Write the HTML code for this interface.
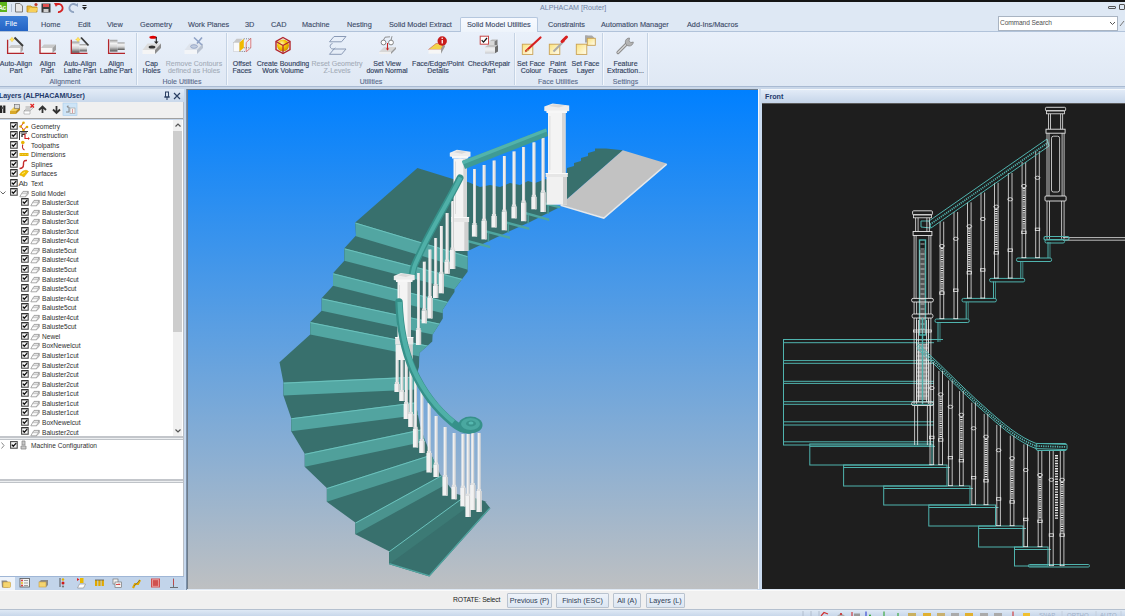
<!DOCTYPE html><html><head><meta charset="utf-8"><style>
*{margin:0;padding:0;box-sizing:border-box}
html,body{width:1125px;height:616px;overflow:hidden;background:#dee8f4;font-family:"Liberation Sans",sans-serif}
body{position:relative}
.a{position:absolute}
.t{position:absolute;white-space:nowrap;line-height:1}
.tab{position:absolute;top:21px;font-size:7.3px;-webkit-text-stroke:0.12px #3b4a68;color:#3b4a68;white-space:nowrap;line-height:1}
.lbl{position:absolute;font-size:7px;-webkit-text-stroke:0.15px #34445f;color:#34445f;text-align:center;line-height:7.7px;white-space:nowrap;transform:translateX(-50%)}
.dis{color:#a3acb8;-webkit-text-stroke:0.1px #a3acb8}
.grp{position:absolute;top:78px;font-size:7px;-webkit-text-stroke:0.12px #5a6b8c;color:#5a6b8c;transform:translateX(-50%);white-space:nowrap;line-height:1}
.sep{position:absolute;top:33px;width:2px;height:52px;border-left:1px solid #c5d3e4;border-right:1px solid #f3f7fc}
.row{position:absolute;height:9px;font-size:6.6px;color:#2e2e2e;white-space:nowrap;line-height:9px}
.cb{position:absolute;width:7px;height:7px;border:1px solid #555;background:#f4f4f4}
.cb:after{content:"";position:absolute;left:1px;top:0px;width:4px;height:2px;border-left:1.3px solid #111;border-bottom:1.3px solid #111;transform:rotate(-50deg);transform-origin:50% 50%;top:1px}
.btn{position:absolute;top:593px;height:15px;border:1px solid #b9c3cf;background:linear-gradient(#eef3fa,#dce6f2);font-size:7.2px;color:#2e3c55;line-height:13px;text-align:center;border-radius:1px}
</style></head><body>
<div class="a" style="left:0;top:0;width:1125px;height:2px;background:#151515"></div>
<div class="a" style="left:0;top:2px;width:1125px;height:14px;background:#dee8f4"></div>
<div class="a" style="left:0;top:2px;width:7px;height:10px;background:#5cb31c"></div>
<div class="t" style="left:-2px;top:3.5px;font-size:7px;color:#eef8e6;font-weight:bold;letter-spacing:-0.5px">Ac</div>
<div class="a" style="left:11px;top:4px;width:1px;height:8px;background:#b3bfcf"></div>
<svg class="a" style="left:14px;top:2px" width="10" height="11"><path d="M1.5 1.5h4.5l2.5 2.5v6h-7z" fill="#e6e6e6" stroke="#7a7a7a" stroke-width="1"/></svg>
<svg class="a" style="left:26px;top:2px" width="13" height="11"><path d="M1 4h4l1 1h5v5H1z" fill="#e9b935" stroke="#b98a1d" stroke-width=".8"/><path d="M2 10l2-4h8l-2 4z" fill="#f7d05a"/><circle cx="10" cy="2.5" r="1.6" fill="#c0392b"/></svg>
<svg class="a" style="left:41px;top:3px" width="10" height="10"><rect x=".5" y=".5" width="9" height="9" fill="#3a3a3a"/><rect x="2" y="1" width="6" height="3" fill="#e05050"/><rect x="2.5" y="6" width="5" height="3" fill="#cfcfcf"/></svg>
<svg class="a" style="left:54px;top:2px" width="11" height="11"><path d="M2 3a4 4 0 1 1 2 7" fill="none" stroke="#d42020" stroke-width="1.8"/><path d="M0 1l4 0-2 4z" fill="#d42020"/></svg>
<svg class="a" style="left:68px;top:2px" width="11" height="11"><path d="M8 3a4 4 0 1 0-2 7" fill="none" stroke="#8fa3c0" stroke-width="1.8"/><path d="M10 1v4l-3-2z" fill="#8fa3c0"/></svg>
<svg class="a" style="left:82px;top:5px" width="6" height="6"><rect x="0.5" y="0" width="4" height="1" fill="#222"/><path d="M0 2h5l-2.5 3z" fill="#222"/></svg>
<div class="t" style="left:540px;top:4.6px;font-size:7.1px;color:#6e82a2">ALPHACAM [Router]</div>
<div class="a" style="left:1108px;top:6px;width:8px;height:3px;border:1px solid #555;border-radius:1px"></div>
<div class="a" style="left:1119px;top:4px;width:6px;height:6px;border:1px solid #555;border-radius:1px"></div>
<div class="a" style="left:0;top:31px;width:1125px;height:1px;background:#b1c3da"></div>
<div class="a" style="left:0;top:16px;width:28px;height:15px;background:linear-gradient(#3d7fd8,#2463c4);border-radius:0 2px 0 0"></div>
<div class="t" style="left:5px;top:20px;font-size:7.6px;color:#fff">File</div>
<div class="a" style="left:460px;top:17px;width:78px;height:15px;background:linear-gradient(#f7faff,#eef4fb);border:1px solid #b5c7de;border-bottom:none;border-radius:2px 2px 0 0"></div>
<div class="tab" style="left:41px">Home</div>
<div class="tab" style="left:78px">Edit</div>
<div class="tab" style="left:107px">View</div>
<div class="tab" style="left:140px">Geometry</div>
<div class="tab" style="left:188px">Work Planes</div>
<div class="tab" style="left:245px">3D</div>
<div class="tab" style="left:271px">CAD</div>
<div class="tab" style="left:302px">Machine</div>
<div class="tab" style="left:347px">Nesting</div>
<div class="tab" style="left:389px">Solid Model Extract</div>
<div class="tab" style="left:467px">Solid Model Utilities</div>
<div class="tab" style="left:548px">Constraints</div>
<div class="tab" style="left:601px">Automation Manager</div>
<div class="tab" style="left:687px">Add-Ins/Macros</div>
<div class="a" style="left:998px;top:16px;width:120px;height:15px;background:#fff;border:1px solid #a9b4c2"></div>
<div class="t" style="left:1000px;top:19.5px;font-size:6.6px;letter-spacing:-0.1px;color:#505050">Command Search</div>
<svg class="a" style="left:1109px;top:21px" width="7" height="5"><path d="M1 1l2.5 2.5L6 1" fill="none" stroke="#555" stroke-width="1"/></svg>
<svg class="a" style="left:1119px;top:19px" width="6" height="8"><path d="M1 7l4-5" stroke="#777" stroke-width="1"/></svg>
<div class="a" style="left:0;top:32px;width:1125px;height:54px;background:linear-gradient(#e9f0fa,#dfe8f4)"></div>
<div class="a" style="left:0;top:86px;width:1125px;height:1px;background:#a9bad2"></div>
<div class="a" style="left:0;top:87px;width:1125px;height:2px;background:#c9d7e9"></div>
<div class="sep" style="left:136px"></div>
<div class="sep" style="left:226px"></div>
<div class="sep" style="left:514px"></div>
<div class="sep" style="left:602px"></div>
<div class="sep" style="left:647px"></div>
<div class="lbl" style="left:16px;top:59.6px">Auto-Align<br>Part</div>
<div class="lbl" style="left:47.5px;top:59.6px">Align<br>Part</div>
<div class="lbl" style="left:80px;top:59.6px">Auto-Align<br>Lathe Part</div>
<div class="lbl" style="left:116px;top:59.6px">Align<br>Lathe Part</div>
<div class="lbl" style="left:151.5px;top:59.6px">Cap<br>Holes</div>
<div class="lbl dis" style="left:194px;top:59.6px">Remove Contours<br>defined as Holes</div>
<div class="lbl" style="left:242px;top:59.6px">Offset<br>Faces</div>
<div class="lbl" style="left:283px;top:59.6px">Create Bounding<br>Work Volume</div>
<div class="lbl dis" style="left:337px;top:59.6px">Reset Geometry<br>Z-Levels</div>
<div class="lbl" style="left:387px;top:59.6px">Set View<br>down Normal</div>
<div class="lbl" style="left:438px;top:59.6px">Face/Edge/Point<br>Details</div>
<div class="lbl" style="left:489px;top:59.6px">Check/Repair<br>Part</div>
<div class="lbl" style="left:531px;top:59.6px">Set Face<br>Colour</div>
<div class="lbl" style="left:558px;top:59.6px">Paint<br>Faces</div>
<div class="lbl" style="left:585.5px;top:59.6px">Set Face<br>Layer</div>
<div class="lbl" style="left:625.5px;top:59.6px">Feature<br>Extraction...</div>
<div class="grp" style="left:65px">Alignment</div>
<div class="grp" style="left:182px">Hole Utilities</div>
<div class="grp" style="left:371px">Utilities</div>
<div class="grp" style="left:558px">Face Utilities</div>
<div class="grp" style="left:625.5px">Settings</div>
<svg class="a" style="left:0;top:0" width="1" height="1"><defs>
<linearGradient id="cyl" x1="0" y1="0" x2="0" y2="1"><stop offset="0" stop-color="#9a9a9a"/><stop offset=".3" stop-color="#f4f4f4"/><stop offset=".6" stop-color="#d0d0d0"/><stop offset="1" stop-color="#555"/></linearGradient>
<radialGradient id="ysph" cx=".4" cy=".35" r=".7"><stop offset="0" stop-color="#fff6b0"/><stop offset=".5" stop-color="#f5c400"/><stop offset="1" stop-color="#c98a00"/></radialGradient>
<linearGradient id="ysq" x1="0" y1="0" x2="1" y2="1"><stop offset="0" stop-color="#fbe27a"/><stop offset="1" stop-color="#fffdf2"/></linearGradient>
</defs></svg>
<svg class="a" style="left:4px;top:34px;overflow:visible" width="24" height="22" viewBox="4 34 24 22"><polygon points="8.5,48 11,45 23,45 20.5,48" fill="#c9c9c9"/><rect x="8.5" y="48" width="12" height="5" fill="#f7f7f7"/><polygon points="20.5,48 23,45 23,50 20.5,53" fill="#a9a9a9"/><path d="M7.6 39.8V53.4H24" fill="none" stroke="#b3262b" stroke-width="1.3"/><line x1="14.5" y1="37.5" x2="23" y2="46" stroke="#3c3c3c" stroke-width="2"/><polygon points="12,36.7 12.9,38.6 14.8,39.5 12.9,40.4 12,42.3 11.1,40.4 9.2,39.5 11.1,38.6" fill="#f2c21a"/><circle cx="12" cy="39.5" r="1.6" fill="#ffe46a"/></svg>
<svg class="a" style="left:36px;top:34px;overflow:visible" width="24" height="22" viewBox="36 34 24 22"><polygon points="41,48 44,44.5 56,44.5 52.5,48" fill="#c9c9c9"/><rect x="41" y="48" width="11.5" height="5" fill="#f7f7f7"/><polygon points="52.5,48 56,44.5 56,50 52.5,53" fill="#a0a0a0"/><path d="M40 39.5V53.4H56" fill="none" stroke="#b3262b" stroke-width="1.3"/></svg>
<svg class="a" style="left:68px;top:34px;overflow:visible" width="24" height="22" viewBox="68 34 24 22"><rect x="72" y="41.5" width="7.5" height="11.3" fill="url(#cyl)"/><rect x="79.5" y="44" width="7.5" height="7.5" fill="url(#cyl)"/><path d="M71.3 39.8V53.4H87.5" fill="none" stroke="#b3262b" stroke-width="1.3"/><line x1="81" y1="37.5" x2="88.5" y2="45.5" stroke="#3c3c3c" stroke-width="1.8"/><polygon points="78,36.7 78.9,38.6 80.8,39.5 78.9,40.4 78,42.3 77.1,40.4 75.2,39.5 77.1,38.6" fill="#f2c21a"/><circle cx="78" cy="39.5" r="1.6" fill="#ffe46a"/></svg>
<svg class="a" style="left:104px;top:34px;overflow:visible" width="24" height="22" viewBox="104 34 24 22"><rect x="110" y="39.8" width="7.5" height="11.8" fill="url(#cyl)"/><rect x="117.5" y="42.4" width="7.2" height="7.6" fill="url(#cyl)"/><path d="M108.6 39.3V53.4H125" fill="none" stroke="#b3262b" stroke-width="1.3"/></svg>
<svg class="a" style="left:140px;top:34px;overflow:visible" width="24" height="22" viewBox="140 34 24 22"><polygon points="142.5,50 147.5,43.5 161,43.5 155,50" fill="#dcdcdc"/><rect x="142.5" y="50" width="12.5" height="4" fill="#f5f5f5"/><polygon points="155,50 161,43.5 161,48 155,54" fill="#8c8c8c"/><ellipse cx="152" cy="47" rx="3.4" ry="1.6" fill="#333"/><ellipse cx="153" cy="37.3" rx="3.6" ry="1.5" fill="#e00000"/><path d="M156.3 37v5" stroke="#222" stroke-width="1.1"/><path d="M154 41.5h4.6l-2.3 2.6z" fill="#222"/></svg>
<svg class="a" style="left:182px;top:34px;overflow:visible" width="24" height="22" viewBox="182 34 24 22"><polygon points="184.5,50 189.5,43.5 203,43.5 197,50" fill="#dfe4ec"/><rect x="184.5" y="50" width="12.5" height="4" fill="#f3f5f8"/><polygon points="197,50 203,43.5 203,48 197,54" fill="#b9c2d0"/><ellipse cx="194" cy="46.5" rx="3.4" ry="1.8" fill="#c2cde0" stroke="#8a9cc0" stroke-width=".8"/><path d="M194 37.5l8 7.5M202 37.5l-5 6" stroke="#8fa2c6" stroke-width="1.6"/></svg>
<svg class="a" style="left:230px;top:34px;overflow:visible" width="24" height="22" viewBox="230 34 24 22"><polygon points="233.5,42.5 236.5,38.8 242.5,38.8 239.5,42.5" fill="#c8c8c8"/><rect x="233.5" y="42.5" width="6" height="9" fill="#fafafa" stroke="#aaa" stroke-width=".3"/><polygon points="239.5,42.5 243.8,38.8 243.8,47.8 239.5,51.5" fill="#f1b900"/><polygon points="246.2,42.5 250.8,38.3 250.8,47.8 246.2,51.8" fill="none" stroke="#e07070" stroke-width=".9"/><path d="M243.8 38.8h7M243.8 47.8h7M239.5 51.5h6.7" stroke="#555" stroke-width=".7" stroke-dasharray="1 1.2"/></svg>
<svg class="a" style="left:272px;top:34px;overflow:visible" width="24" height="22" viewBox="272 34 24 22"><circle cx="283" cy="45.5" r="6" fill="url(#ysph)"/><polygon points="283,37.5 290,41.5 290,49.5 283,53.5 276,49.5 276,41.5" fill="none" stroke="#b3262b" stroke-width="1.4"/><path d="M283 45.5V53.5M283 45.5L276 41.5M283 45.5L290 41.5" stroke="#b3262b" stroke-width="1.2"/></svg>
<svg class="a" style="left:326px;top:34px;overflow:visible" width="24" height="22" viewBox="326 34 24 22"><polygon points="329.5,41.8 334,36.5 346,36.5 341.5,41.8" fill="none" stroke="#8a9ab6" stroke-width="1"/><polygon points="329.5,54.3 334,49 346,49 341.5,54.3" fill="none" stroke="#8a9ab6" stroke-width="1"/><path d="M332.5 43.5a2.8 2.8 0 1 0 2.8 4.3" fill="none" stroke="#8a9ab6" stroke-width="1"/></svg>
<svg class="a" style="left:376px;top:34px;overflow:visible" width="24" height="22" viewBox="376 34 24 22"><polygon points="379,52 384,47 396,47 391,52" fill="#d7d7d7"/><polygon points="379,52 391,52 391,54 379,54" fill="#f0f0f0"/><polygon points="391,52 396,47 396,49 391,54" fill="#999"/><circle cx="383.5" cy="42.5" r="2.4" fill="#fff" stroke="#777" stroke-width=".9"/><circle cx="391" cy="42.5" r="2.4" fill="#fff" stroke="#777" stroke-width=".9"/><path d="M383.5 40.2 L385 37.2 L390 36.8 M391 40.2l1-4" fill="none" stroke="#777" stroke-width=".8"/><path d="M387.5 43v6" stroke="#c82020" stroke-width="1.1"/><path d="M385.8 48.5h3.4l-1.7 2z" fill="#c82020"/></svg>
<svg class="a" style="left:426px;top:34px;overflow:visible" width="24" height="22" viewBox="426 34 24 22"><polygon points="428.5,49.5 436,43.5 444,43.5 441,49.5" fill="#f2d34a" stroke="#c04040" stroke-width=".5"/><rect x="428.5" y="49.5" width="12.5" height="4.2" fill="#f6f6f6"/><polygon points="441,49.5 444,43.5 445,46.5 441,53.7" fill="#9a9a9a"/><circle cx="442.2" cy="41" r="4.7" fill="#c91c1c"/><rect x="441.6" y="40" width="1.3" height="3.5" fill="#fff"/><circle cx="442.2" cy="38.3" r=".8" fill="#fff"/></svg>
<svg class="a" style="left:478px;top:34px;overflow:visible" width="24" height="22" viewBox="478 34 24 22"><polygon points="489,41.5 492,39.5 497.5,39.5 494.5,41.5" fill="#b9b9b9"/><rect x="489" y="41.5" width="5.5" height="5" fill="#d9d9d9"/><polygon points="494.5,41.5 497.5,39.5 497.5,45 494.5,46.5" fill="#7a7a7a"/><polygon points="485,47 488,45 498,45 495,47" fill="#c4c4c4"/><rect x="485" y="47" width="10" height="6.3" fill="url(#cyl)" opacity=".55"/><rect x="485" y="47" width="10" height="6.3" fill="#f2f2f2" opacity=".6"/><polygon points="495,47 498,45 498,51.5 495,53.3" fill="#6c6c6c"/><rect x="480.2" y="36.2" width="8.3" height="8" fill="#fff" stroke="#c84848" stroke-width="1"/><path d="M481.7 40.2l1.8 2 3.5-4.2" fill="none" stroke="#111" stroke-width="1.2"/></svg>
<svg class="a" style="left:520px;top:34px;overflow:visible" width="24" height="22" viewBox="520 34 24 22"><rect x="522.3" y="44.2" width="10.5" height="10.2" fill="url(#ysq)" stroke="#c9a050" stroke-width=".9"/><path d="M526 51l14.5-13.5" stroke="#d62020" stroke-width="2.2" stroke-linecap="round"/><path d="M524.5 52.5l3.5-3.5 1.3 1.3z" fill="#c8a040"/></svg>
<svg class="a" style="left:547px;top:34px;overflow:visible" width="24" height="22" viewBox="547 34 24 22"><rect x="549.3" y="44.2" width="10.5" height="10.2" fill="url(#ysq)" stroke="#c9a050" stroke-width=".9"/><path d="M553.5 51.5l9-9" stroke="#aaa" stroke-width="2"/><path d="M562 41.5l4.5-4.5" stroke="#d82020" stroke-width="3" stroke-linecap="round"/><circle cx="563" cy="41" r="1.6" fill="#d82020"/></svg>
<svg class="a" style="left:574px;top:34px;overflow:visible" width="24" height="22" viewBox="574 34 24 22"><polygon points="585,35.5 592,35.5 595,38.5 587.5,38.5" fill="#a8a8a8"/><rect x="585" y="35.5" width="2.5" height="7" fill="#a8a8a8"/><rect x="587.3" y="38.3" width="8" height="7" fill="url(#ysq)" stroke="#c9a050" stroke-width=".9"/><rect x="576.3" y="44.2" width="10.5" height="10.2" fill="url(#ysq)" stroke="#c9a050" stroke-width=".9"/></svg>
<svg class="a" style="left:614px;top:34px;overflow:visible" width="24" height="22" viewBox="614 34 24 22"><path d="M618 52.5l9.5-9.5" stroke="#8a8a8a" stroke-width="3.2" stroke-linecap="round"/><path d="M618 52.5l9.5-9.5" stroke="#d4d4d4" stroke-width="1.4" stroke-linecap="round"/><path d="M629.5 38a4 4 0 1 0 3.8 4l-2.6 .6-1.6-1.8z" fill="#b3b3b3" stroke="#7d7d7d" stroke-width=".7"/></svg>
<div class="a" style="left:0;top:89px;width:187px;height:501px;background:#c8d8ec"></div>
<div class="a" style="left:0;top:89px;width:184px;height:13px;background:linear-gradient(#e3ecf7,#c9d8eb)"></div>
<div class="t" style="left:-1px;top:93.2px;font-size:7.1px;letter-spacing:-0.1px;color:#1f3a6b;font-weight:bold">Layers (ALPHACAM/User)</div>
<svg class="a" style="left:163px;top:91px" width="8" height="10"><rect x="2.5" y="1" width="3" height="5" fill="none" stroke="#2a3f63" stroke-width="1"/><path d="M1 6h6M4 6v3" stroke="#2a3f63" stroke-width="1"/></svg>
<svg class="a" style="left:173px;top:92px" width="8" height="8"><path d="M1 1l6 6M7 1l-6 6" stroke="#2a3f63" stroke-width="1.2"/></svg>
<div class="a" style="left:0;top:102px;width:183px;height:17px;background:#f0f0f0;border-bottom:1px solid #a0a0a0"></div>
<div class="a" style="left:0;top:120px;width:183px;height:316px;background:#fff"></div>
<div class="a" style="left:173px;top:120px;width:9px;height:316px;background:#f0f0f0"></div>
<div class="a" style="left:173px;top:131px;width:9px;height:201px;background:#cdcdcd"></div>
<svg class="a" style="left:174px;top:122px" width="8" height="6"><path d="M1.5 4.5L4 2l2.5 2.5" fill="none" stroke="#555" stroke-width="1.2"/></svg>
<svg class="a" style="left:174px;top:428px" width="8" height="6"><path d="M1.5 1.5L4 4l2.5-2.5" fill="none" stroke="#555" stroke-width="1.2"/></svg>
<div class="a" style="left:0;top:436px;width:184px;height:2px;background:#c3c6cb"></div>
<div class="a" style="left:0;top:438px;width:184px;height:1px;background:#eceef0"></div>
<div class="a" style="left:0;top:439px;width:184px;height:1px;background:#bfc3c8"></div>
<div class="a" style="left:0;top:440px;width:183px;height:39px;background:#fff"></div>
<div class="a" style="left:0;top:479px;width:184px;height:2px;background:#c3c6cb"></div>
<div class="a" style="left:0;top:481px;width:184px;height:1px;background:#eceef0"></div>
<div class="a" style="left:0;top:482px;width:184px;height:1px;background:#bfc3c8"></div>
<div class="a" style="left:0;top:483px;width:183px;height:93px;background:#fff"></div>
<div class="a" style="left:183px;top:102px;width:1px;height:474px;background:#b9bec5"></div>
<div class="a" style="left:184px;top:89px;width:2px;height:501px;background:#c6d8ee"></div>
<div class="a" style="left:186px;top:89px;width:1px;height:501px;background:#7b90a9"></div>
<div class="a" style="left:0;top:576px;width:184px;height:14px;background:#c2d4ea;border-top:1px solid #9fb6d6"></div>
<div class="a" style="left:0;top:577px;width:15px;height:13px;background:#eef3fa"></div>
<svg class="a" style="left:10px;top:121.50px" width="8" height="8"><rect x="0.6" y="0.6" width="6.6" height="6.6" fill="#f7f7f7" stroke="#4a4a4a" stroke-width="1.1"/><path d="M0.8 0.8H7" stroke="#222" stroke-width=".9"/><path d="M1.8 3.6L3.3 5.3 6.2 2.1" fill="none" stroke="#111" stroke-width="1.3"/></svg>
<svg class="a" style="left:19px;top:120.60px" width="11" height="11" viewBox="0 0 11 11"><path d="M4.5 1.5L2 5.5 4.5 9 8 5.5" fill="none" stroke="#d03030" stroke-width="1"/><circle cx="4.5" cy="1.8" r="1.3" fill="#e0a800"/><circle cx="1.6" cy="5.5" r="1.3" fill="#e0a800"/><circle cx="8" cy="6" r="1.3" fill="#e0a800"/><circle cx="4.5" cy="9" r="1.3" fill="#e0a800"/></svg>
<div class="row" style="left:31px;top:121.60px">Geometry</div>
<svg class="a" style="left:10px;top:131.06px" width="8" height="8"><rect x="0.6" y="0.6" width="6.6" height="6.6" fill="#f7f7f7" stroke="#4a4a4a" stroke-width="1.1"/><path d="M0.8 0.8H7" stroke="#222" stroke-width=".9"/><path d="M1.8 3.6L3.3 5.3 6.2 2.1" fill="none" stroke="#111" stroke-width="1.3"/></svg>
<svg class="a" style="left:19px;top:130.16px" width="11" height="11" viewBox="0 0 11 11"><path d="M0.5 10V1.5H9M1.5 3H8M2.5 4.5H6" stroke="#333" stroke-width="1" fill="none"/><rect x="2.2" y="5.2" width="1.6" height="1.6" fill="#222"/><path d="M6 3.5V8.5H9.5" stroke="#d02020" stroke-width="1.2" fill="none"/><path d="M9 7l1.8 1.5L9 10z" fill="#d02020"/></svg>
<div class="row" style="left:31px;top:131.16px">Construction</div>
<svg class="a" style="left:10px;top:140.62px" width="8" height="8"><rect x="0.6" y="0.6" width="6.6" height="6.6" fill="#f7f7f7" stroke="#4a4a4a" stroke-width="1.1"/><path d="M0.8 0.8H7" stroke="#222" stroke-width=".9"/><path d="M1.8 3.6L3.3 5.3 6.2 2.1" fill="none" stroke="#111" stroke-width="1.3"/></svg>
<svg class="a" style="left:19px;top:139.72px" width="11" height="11" viewBox="0 0 11 11"><circle cx="3.8" cy="2.5" r="1.8" fill="#e8b400"/><path d="M3.8 4.5C3 7 3.5 9 5.5 10" fill="none" stroke="#c03030" stroke-width="1.1"/></svg>
<div class="row" style="left:31px;top:140.72px">Toolpaths</div>
<svg class="a" style="left:10px;top:150.18px" width="8" height="8"><rect x="0.6" y="0.6" width="6.6" height="6.6" fill="#f7f7f7" stroke="#4a4a4a" stroke-width="1.1"/><path d="M0.8 0.8H7" stroke="#222" stroke-width=".9"/><path d="M1.8 3.6L3.3 5.3 6.2 2.1" fill="none" stroke="#111" stroke-width="1.3"/></svg>
<svg class="a" style="left:19px;top:149.28px" width="11" height="11" viewBox="0 0 11 11"><rect x="0.5" y="4" width="9" height="3" fill="#e6b400"/><path d="M1.5 5.5h7" stroke="#fff3a0" stroke-width=".6" stroke-dasharray=".8 .8"/></svg>
<div class="row" style="left:31px;top:150.28px">Dimensions</div>
<svg class="a" style="left:10px;top:159.74px" width="8" height="8"><rect x="0.6" y="0.6" width="6.6" height="6.6" fill="#f7f7f7" stroke="#4a4a4a" stroke-width="1.1"/><path d="M0.8 0.8H7" stroke="#222" stroke-width=".9"/><path d="M1.8 3.6L3.3 5.3 6.2 2.1" fill="none" stroke="#111" stroke-width="1.3"/></svg>
<svg class="a" style="left:19px;top:158.84px" width="11" height="11" viewBox="0 0 11 11"><path d="M8 1.5C4 1 4.5 4 4.5 5.5S4 9.5 0.5 9.5" fill="none" stroke="#c42a2a" stroke-width="1.4"/></svg>
<div class="row" style="left:31px;top:159.84px">Splines</div>
<svg class="a" style="left:10px;top:169.30px" width="8" height="8"><rect x="0.6" y="0.6" width="6.6" height="6.6" fill="#f7f7f7" stroke="#4a4a4a" stroke-width="1.1"/><path d="M0.8 0.8H7" stroke="#222" stroke-width=".9"/><path d="M1.8 3.6L3.3 5.3 6.2 2.1" fill="none" stroke="#111" stroke-width="1.3"/></svg>
<svg class="a" style="left:19px;top:168.40px" width="11" height="11" viewBox="0 0 11 11"><path d="M0.5 7C2 4 4 2.5 6.5 2.3 8 2.2 9 3 9.5 3.5 8 5 7 6.5 5 9 3.5 8 2 7.3 0.5 7z" fill="#f0c000" stroke="#d89a00" stroke-width=".5"/><path d="M3 6l3-2" stroke="#fff2a0" stroke-width=".8"/></svg>
<div class="row" style="left:31px;top:169.40px">Surfaces</div>
<svg class="a" style="left:10px;top:178.86px" width="8" height="8"><rect x="0.6" y="0.6" width="6.6" height="6.6" fill="#f7f7f7" stroke="#4a4a4a" stroke-width="1.1"/><path d="M0.8 0.8H7" stroke="#222" stroke-width=".9"/><path d="M1.8 3.6L3.3 5.3 6.2 2.1" fill="none" stroke="#111" stroke-width="1.3"/></svg>
<div class="t" style="left:18.5px;top:179.86px;font-size:8px;color:#444;letter-spacing:-0.6px">Ab</div>
<div class="row" style="left:31px;top:178.96px">Text</div>
<svg class="a" style="left:10px;top:188.42px" width="8" height="8"><rect x="0.6" y="0.6" width="6.6" height="6.6" fill="#f7f7f7" stroke="#4a4a4a" stroke-width="1.1"/><path d="M0.8 0.8H7" stroke="#222" stroke-width=".9"/><path d="M1.8 3.6L3.3 5.3 6.2 2.1" fill="none" stroke="#111" stroke-width="1.3"/></svg>
<svg class="a" style="left:19px;top:187.52px" width="11" height="11" viewBox="0 0 11 11"><path d="M0.8 8.8L2.6 5.6H8.2L6.4 8.8z" fill="#fbfbfb" stroke="#8a8a8a" stroke-width=".7"/><path d="M2.6 5.6L4 3.4H9.2L8.2 5.6M9.2 3.4V6.2L6.4 8.8" fill="#e2e2e2" stroke="#8a8a8a" stroke-width=".7"/></svg>
<div class="row" style="left:31px;top:188.52px">Solid Model</div>
<svg class="a" style="left:0px;top:190.02px" width="6" height="6"><path d="M0.5 1.5L3 4l2.5-2.5" fill="none" stroke="#666" stroke-width="1"/></svg>
<svg class="a" style="left:21px;top:197.98px" width="8" height="8"><rect x="0.6" y="0.6" width="6.6" height="6.6" fill="#f7f7f7" stroke="#4a4a4a" stroke-width="1.1"/><path d="M0.8 0.8H7" stroke="#222" stroke-width=".9"/><path d="M1.8 3.6L3.3 5.3 6.2 2.1" fill="none" stroke="#111" stroke-width="1.3"/></svg>
<svg class="a" style="left:30px;top:197.08px" width="11" height="11" viewBox="0 0 11 11"><path d="M0.8 8.8L2.6 5.6H8.2L6.4 8.8z" fill="#fbfbfb" stroke="#8a8a8a" stroke-width=".7"/><path d="M2.6 5.6L4 3.4H9.2L8.2 5.6M9.2 3.4V6.2L6.4 8.8" fill="#e2e2e2" stroke="#8a8a8a" stroke-width=".7"/></svg>
<div class="row" style="left:42px;top:198.08px">Baluster3cut</div>
<svg class="a" style="left:21px;top:207.54px" width="8" height="8"><rect x="0.6" y="0.6" width="6.6" height="6.6" fill="#f7f7f7" stroke="#4a4a4a" stroke-width="1.1"/><path d="M0.8 0.8H7" stroke="#222" stroke-width=".9"/><path d="M1.8 3.6L3.3 5.3 6.2 2.1" fill="none" stroke="#111" stroke-width="1.3"/></svg>
<svg class="a" style="left:30px;top:206.64px" width="11" height="11" viewBox="0 0 11 11"><path d="M0.8 8.8L2.6 5.6H8.2L6.4 8.8z" fill="#fbfbfb" stroke="#8a8a8a" stroke-width=".7"/><path d="M2.6 5.6L4 3.4H9.2L8.2 5.6M9.2 3.4V6.2L6.4 8.8" fill="#e2e2e2" stroke="#8a8a8a" stroke-width=".7"/></svg>
<div class="row" style="left:42px;top:207.64px">Baluster3cut</div>
<svg class="a" style="left:21px;top:217.10px" width="8" height="8"><rect x="0.6" y="0.6" width="6.6" height="6.6" fill="#f7f7f7" stroke="#4a4a4a" stroke-width="1.1"/><path d="M0.8 0.8H7" stroke="#222" stroke-width=".9"/><path d="M1.8 3.6L3.3 5.3 6.2 2.1" fill="none" stroke="#111" stroke-width="1.3"/></svg>
<svg class="a" style="left:30px;top:216.20px" width="11" height="11" viewBox="0 0 11 11"><path d="M0.8 8.8L2.6 5.6H8.2L6.4 8.8z" fill="#fbfbfb" stroke="#8a8a8a" stroke-width=".7"/><path d="M2.6 5.6L4 3.4H9.2L8.2 5.6M9.2 3.4V6.2L6.4 8.8" fill="#e2e2e2" stroke="#8a8a8a" stroke-width=".7"/></svg>
<div class="row" style="left:42px;top:217.20px">Baluster3cut</div>
<svg class="a" style="left:21px;top:226.66px" width="8" height="8"><rect x="0.6" y="0.6" width="6.6" height="6.6" fill="#f7f7f7" stroke="#4a4a4a" stroke-width="1.1"/><path d="M0.8 0.8H7" stroke="#222" stroke-width=".9"/><path d="M1.8 3.6L3.3 5.3 6.2 2.1" fill="none" stroke="#111" stroke-width="1.3"/></svg>
<svg class="a" style="left:30px;top:225.76px" width="11" height="11" viewBox="0 0 11 11"><path d="M0.8 8.8L2.6 5.6H8.2L6.4 8.8z" fill="#fbfbfb" stroke="#8a8a8a" stroke-width=".7"/><path d="M2.6 5.6L4 3.4H9.2L8.2 5.6M9.2 3.4V6.2L6.4 8.8" fill="#e2e2e2" stroke="#8a8a8a" stroke-width=".7"/></svg>
<div class="row" style="left:42px;top:226.76px">Baluster3cut</div>
<svg class="a" style="left:21px;top:236.22px" width="8" height="8"><rect x="0.6" y="0.6" width="6.6" height="6.6" fill="#f7f7f7" stroke="#4a4a4a" stroke-width="1.1"/><path d="M0.8 0.8H7" stroke="#222" stroke-width=".9"/><path d="M1.8 3.6L3.3 5.3 6.2 2.1" fill="none" stroke="#111" stroke-width="1.3"/></svg>
<svg class="a" style="left:30px;top:235.32px" width="11" height="11" viewBox="0 0 11 11"><path d="M0.8 8.8L2.6 5.6H8.2L6.4 8.8z" fill="#fbfbfb" stroke="#8a8a8a" stroke-width=".7"/><path d="M2.6 5.6L4 3.4H9.2L8.2 5.6M9.2 3.4V6.2L6.4 8.8" fill="#e2e2e2" stroke="#8a8a8a" stroke-width=".7"/></svg>
<div class="row" style="left:42px;top:236.32px">Baluster4cut</div>
<svg class="a" style="left:21px;top:245.78px" width="8" height="8"><rect x="0.6" y="0.6" width="6.6" height="6.6" fill="#f7f7f7" stroke="#4a4a4a" stroke-width="1.1"/><path d="M0.8 0.8H7" stroke="#222" stroke-width=".9"/><path d="M1.8 3.6L3.3 5.3 6.2 2.1" fill="none" stroke="#111" stroke-width="1.3"/></svg>
<svg class="a" style="left:30px;top:244.88px" width="11" height="11" viewBox="0 0 11 11"><path d="M0.8 8.8L2.6 5.6H8.2L6.4 8.8z" fill="#fbfbfb" stroke="#8a8a8a" stroke-width=".7"/><path d="M2.6 5.6L4 3.4H9.2L8.2 5.6M9.2 3.4V6.2L6.4 8.8" fill="#e2e2e2" stroke="#8a8a8a" stroke-width=".7"/></svg>
<div class="row" style="left:42px;top:245.88px">Baluste5cut</div>
<svg class="a" style="left:21px;top:255.34px" width="8" height="8"><rect x="0.6" y="0.6" width="6.6" height="6.6" fill="#f7f7f7" stroke="#4a4a4a" stroke-width="1.1"/><path d="M0.8 0.8H7" stroke="#222" stroke-width=".9"/><path d="M1.8 3.6L3.3 5.3 6.2 2.1" fill="none" stroke="#111" stroke-width="1.3"/></svg>
<svg class="a" style="left:30px;top:254.44px" width="11" height="11" viewBox="0 0 11 11"><path d="M0.8 8.8L2.6 5.6H8.2L6.4 8.8z" fill="#fbfbfb" stroke="#8a8a8a" stroke-width=".7"/><path d="M2.6 5.6L4 3.4H9.2L8.2 5.6M9.2 3.4V6.2L6.4 8.8" fill="#e2e2e2" stroke="#8a8a8a" stroke-width=".7"/></svg>
<div class="row" style="left:42px;top:255.44px">Baluster4cut</div>
<svg class="a" style="left:21px;top:264.90px" width="8" height="8"><rect x="0.6" y="0.6" width="6.6" height="6.6" fill="#f7f7f7" stroke="#4a4a4a" stroke-width="1.1"/><path d="M0.8 0.8H7" stroke="#222" stroke-width=".9"/><path d="M1.8 3.6L3.3 5.3 6.2 2.1" fill="none" stroke="#111" stroke-width="1.3"/></svg>
<svg class="a" style="left:30px;top:264.00px" width="11" height="11" viewBox="0 0 11 11"><path d="M0.8 8.8L2.6 5.6H8.2L6.4 8.8z" fill="#fbfbfb" stroke="#8a8a8a" stroke-width=".7"/><path d="M2.6 5.6L4 3.4H9.2L8.2 5.6M9.2 3.4V6.2L6.4 8.8" fill="#e2e2e2" stroke="#8a8a8a" stroke-width=".7"/></svg>
<div class="row" style="left:42px;top:265.00px">Baluste5cut</div>
<svg class="a" style="left:21px;top:274.46px" width="8" height="8"><rect x="0.6" y="0.6" width="6.6" height="6.6" fill="#f7f7f7" stroke="#4a4a4a" stroke-width="1.1"/><path d="M0.8 0.8H7" stroke="#222" stroke-width=".9"/><path d="M1.8 3.6L3.3 5.3 6.2 2.1" fill="none" stroke="#111" stroke-width="1.3"/></svg>
<svg class="a" style="left:30px;top:273.56px" width="11" height="11" viewBox="0 0 11 11"><path d="M0.8 8.8L2.6 5.6H8.2L6.4 8.8z" fill="#fbfbfb" stroke="#8a8a8a" stroke-width=".7"/><path d="M2.6 5.6L4 3.4H9.2L8.2 5.6M9.2 3.4V6.2L6.4 8.8" fill="#e2e2e2" stroke="#8a8a8a" stroke-width=".7"/></svg>
<div class="row" style="left:42px;top:274.56px">Baluster4cut</div>
<svg class="a" style="left:21px;top:284.02px" width="8" height="8"><rect x="0.6" y="0.6" width="6.6" height="6.6" fill="#f7f7f7" stroke="#4a4a4a" stroke-width="1.1"/><path d="M0.8 0.8H7" stroke="#222" stroke-width=".9"/><path d="M1.8 3.6L3.3 5.3 6.2 2.1" fill="none" stroke="#111" stroke-width="1.3"/></svg>
<svg class="a" style="left:30px;top:283.12px" width="11" height="11" viewBox="0 0 11 11"><path d="M0.8 8.8L2.6 5.6H8.2L6.4 8.8z" fill="#fbfbfb" stroke="#8a8a8a" stroke-width=".7"/><path d="M2.6 5.6L4 3.4H9.2L8.2 5.6M9.2 3.4V6.2L6.4 8.8" fill="#e2e2e2" stroke="#8a8a8a" stroke-width=".7"/></svg>
<div class="row" style="left:42px;top:284.12px">Baluste5cut</div>
<svg class="a" style="left:21px;top:293.58px" width="8" height="8"><rect x="0.6" y="0.6" width="6.6" height="6.6" fill="#f7f7f7" stroke="#4a4a4a" stroke-width="1.1"/><path d="M0.8 0.8H7" stroke="#222" stroke-width=".9"/><path d="M1.8 3.6L3.3 5.3 6.2 2.1" fill="none" stroke="#111" stroke-width="1.3"/></svg>
<svg class="a" style="left:30px;top:292.68px" width="11" height="11" viewBox="0 0 11 11"><path d="M0.8 8.8L2.6 5.6H8.2L6.4 8.8z" fill="#fbfbfb" stroke="#8a8a8a" stroke-width=".7"/><path d="M2.6 5.6L4 3.4H9.2L8.2 5.6M9.2 3.4V6.2L6.4 8.8" fill="#e2e2e2" stroke="#8a8a8a" stroke-width=".7"/></svg>
<div class="row" style="left:42px;top:293.68px">Baluster4cut</div>
<svg class="a" style="left:21px;top:303.14px" width="8" height="8"><rect x="0.6" y="0.6" width="6.6" height="6.6" fill="#f7f7f7" stroke="#4a4a4a" stroke-width="1.1"/><path d="M0.8 0.8H7" stroke="#222" stroke-width=".9"/><path d="M1.8 3.6L3.3 5.3 6.2 2.1" fill="none" stroke="#111" stroke-width="1.3"/></svg>
<svg class="a" style="left:30px;top:302.24px" width="11" height="11" viewBox="0 0 11 11"><path d="M0.8 8.8L2.6 5.6H8.2L6.4 8.8z" fill="#fbfbfb" stroke="#8a8a8a" stroke-width=".7"/><path d="M2.6 5.6L4 3.4H9.2L8.2 5.6M9.2 3.4V6.2L6.4 8.8" fill="#e2e2e2" stroke="#8a8a8a" stroke-width=".7"/></svg>
<div class="row" style="left:42px;top:303.24px">Baluste5cut</div>
<svg class="a" style="left:21px;top:312.70px" width="8" height="8"><rect x="0.6" y="0.6" width="6.6" height="6.6" fill="#f7f7f7" stroke="#4a4a4a" stroke-width="1.1"/><path d="M0.8 0.8H7" stroke="#222" stroke-width=".9"/><path d="M1.8 3.6L3.3 5.3 6.2 2.1" fill="none" stroke="#111" stroke-width="1.3"/></svg>
<svg class="a" style="left:30px;top:311.80px" width="11" height="11" viewBox="0 0 11 11"><path d="M0.8 8.8L2.6 5.6H8.2L6.4 8.8z" fill="#fbfbfb" stroke="#8a8a8a" stroke-width=".7"/><path d="M2.6 5.6L4 3.4H9.2L8.2 5.6M9.2 3.4V6.2L6.4 8.8" fill="#e2e2e2" stroke="#8a8a8a" stroke-width=".7"/></svg>
<div class="row" style="left:42px;top:312.80px">Baluster4cut</div>
<svg class="a" style="left:21px;top:322.26px" width="8" height="8"><rect x="0.6" y="0.6" width="6.6" height="6.6" fill="#f7f7f7" stroke="#4a4a4a" stroke-width="1.1"/><path d="M0.8 0.8H7" stroke="#222" stroke-width=".9"/><path d="M1.8 3.6L3.3 5.3 6.2 2.1" fill="none" stroke="#111" stroke-width="1.3"/></svg>
<svg class="a" style="left:30px;top:321.36px" width="11" height="11" viewBox="0 0 11 11"><path d="M0.8 8.8L2.6 5.6H8.2L6.4 8.8z" fill="#fbfbfb" stroke="#8a8a8a" stroke-width=".7"/><path d="M2.6 5.6L4 3.4H9.2L8.2 5.6M9.2 3.4V6.2L6.4 8.8" fill="#e2e2e2" stroke="#8a8a8a" stroke-width=".7"/></svg>
<div class="row" style="left:42px;top:322.36px">Baluste5cut</div>
<svg class="a" style="left:21px;top:331.82px" width="8" height="8"><rect x="0.6" y="0.6" width="6.6" height="6.6" fill="#f7f7f7" stroke="#4a4a4a" stroke-width="1.1"/><path d="M0.8 0.8H7" stroke="#222" stroke-width=".9"/><path d="M1.8 3.6L3.3 5.3 6.2 2.1" fill="none" stroke="#111" stroke-width="1.3"/></svg>
<svg class="a" style="left:30px;top:330.92px" width="11" height="11" viewBox="0 0 11 11"><path d="M0.8 8.8L2.6 5.6H8.2L6.4 8.8z" fill="#fbfbfb" stroke="#8a8a8a" stroke-width=".7"/><path d="M2.6 5.6L4 3.4H9.2L8.2 5.6M9.2 3.4V6.2L6.4 8.8" fill="#e2e2e2" stroke="#8a8a8a" stroke-width=".7"/></svg>
<div class="row" style="left:42px;top:331.92px">Newel</div>
<svg class="a" style="left:21px;top:341.38px" width="8" height="8"><rect x="0.6" y="0.6" width="6.6" height="6.6" fill="#f7f7f7" stroke="#4a4a4a" stroke-width="1.1"/><path d="M0.8 0.8H7" stroke="#222" stroke-width=".9"/><path d="M1.8 3.6L3.3 5.3 6.2 2.1" fill="none" stroke="#111" stroke-width="1.3"/></svg>
<svg class="a" style="left:30px;top:340.48px" width="11" height="11" viewBox="0 0 11 11"><path d="M0.8 8.8L2.6 5.6H8.2L6.4 8.8z" fill="#fbfbfb" stroke="#8a8a8a" stroke-width=".7"/><path d="M2.6 5.6L4 3.4H9.2L8.2 5.6M9.2 3.4V6.2L6.4 8.8" fill="#e2e2e2" stroke="#8a8a8a" stroke-width=".7"/></svg>
<div class="row" style="left:42px;top:341.48px">BoxNewelcut</div>
<svg class="a" style="left:21px;top:350.94px" width="8" height="8"><rect x="0.6" y="0.6" width="6.6" height="6.6" fill="#f7f7f7" stroke="#4a4a4a" stroke-width="1.1"/><path d="M0.8 0.8H7" stroke="#222" stroke-width=".9"/><path d="M1.8 3.6L3.3 5.3 6.2 2.1" fill="none" stroke="#111" stroke-width="1.3"/></svg>
<svg class="a" style="left:30px;top:350.04px" width="11" height="11" viewBox="0 0 11 11"><path d="M0.8 8.8L2.6 5.6H8.2L6.4 8.8z" fill="#fbfbfb" stroke="#8a8a8a" stroke-width=".7"/><path d="M2.6 5.6L4 3.4H9.2L8.2 5.6M9.2 3.4V6.2L6.4 8.8" fill="#e2e2e2" stroke="#8a8a8a" stroke-width=".7"/></svg>
<div class="row" style="left:42px;top:351.04px">Baluster1cut</div>
<svg class="a" style="left:21px;top:360.50px" width="8" height="8"><rect x="0.6" y="0.6" width="6.6" height="6.6" fill="#f7f7f7" stroke="#4a4a4a" stroke-width="1.1"/><path d="M0.8 0.8H7" stroke="#222" stroke-width=".9"/><path d="M1.8 3.6L3.3 5.3 6.2 2.1" fill="none" stroke="#111" stroke-width="1.3"/></svg>
<svg class="a" style="left:30px;top:359.60px" width="11" height="11" viewBox="0 0 11 11"><path d="M0.8 8.8L2.6 5.6H8.2L6.4 8.8z" fill="#fbfbfb" stroke="#8a8a8a" stroke-width=".7"/><path d="M2.6 5.6L4 3.4H9.2L8.2 5.6M9.2 3.4V6.2L6.4 8.8" fill="#e2e2e2" stroke="#8a8a8a" stroke-width=".7"/></svg>
<div class="row" style="left:42px;top:360.60px">Baluster2cut</div>
<svg class="a" style="left:21px;top:370.06px" width="8" height="8"><rect x="0.6" y="0.6" width="6.6" height="6.6" fill="#f7f7f7" stroke="#4a4a4a" stroke-width="1.1"/><path d="M0.8 0.8H7" stroke="#222" stroke-width=".9"/><path d="M1.8 3.6L3.3 5.3 6.2 2.1" fill="none" stroke="#111" stroke-width="1.3"/></svg>
<svg class="a" style="left:30px;top:369.16px" width="11" height="11" viewBox="0 0 11 11"><path d="M0.8 8.8L2.6 5.6H8.2L6.4 8.8z" fill="#fbfbfb" stroke="#8a8a8a" stroke-width=".7"/><path d="M2.6 5.6L4 3.4H9.2L8.2 5.6M9.2 3.4V6.2L6.4 8.8" fill="#e2e2e2" stroke="#8a8a8a" stroke-width=".7"/></svg>
<div class="row" style="left:42px;top:370.16px">Baluster2cut</div>
<svg class="a" style="left:21px;top:379.62px" width="8" height="8"><rect x="0.6" y="0.6" width="6.6" height="6.6" fill="#f7f7f7" stroke="#4a4a4a" stroke-width="1.1"/><path d="M0.8 0.8H7" stroke="#222" stroke-width=".9"/><path d="M1.8 3.6L3.3 5.3 6.2 2.1" fill="none" stroke="#111" stroke-width="1.3"/></svg>
<svg class="a" style="left:30px;top:378.72px" width="11" height="11" viewBox="0 0 11 11"><path d="M0.8 8.8L2.6 5.6H8.2L6.4 8.8z" fill="#fbfbfb" stroke="#8a8a8a" stroke-width=".7"/><path d="M2.6 5.6L4 3.4H9.2L8.2 5.6M9.2 3.4V6.2L6.4 8.8" fill="#e2e2e2" stroke="#8a8a8a" stroke-width=".7"/></svg>
<div class="row" style="left:42px;top:379.72px">Baluster2cut</div>
<svg class="a" style="left:21px;top:389.18px" width="8" height="8"><rect x="0.6" y="0.6" width="6.6" height="6.6" fill="#f7f7f7" stroke="#4a4a4a" stroke-width="1.1"/><path d="M0.8 0.8H7" stroke="#222" stroke-width=".9"/><path d="M1.8 3.6L3.3 5.3 6.2 2.1" fill="none" stroke="#111" stroke-width="1.3"/></svg>
<svg class="a" style="left:30px;top:388.28px" width="11" height="11" viewBox="0 0 11 11"><path d="M0.8 8.8L2.6 5.6H8.2L6.4 8.8z" fill="#fbfbfb" stroke="#8a8a8a" stroke-width=".7"/><path d="M2.6 5.6L4 3.4H9.2L8.2 5.6M9.2 3.4V6.2L6.4 8.8" fill="#e2e2e2" stroke="#8a8a8a" stroke-width=".7"/></svg>
<div class="row" style="left:42px;top:389.28px">Baluster1cut</div>
<svg class="a" style="left:21px;top:398.74px" width="8" height="8"><rect x="0.6" y="0.6" width="6.6" height="6.6" fill="#f7f7f7" stroke="#4a4a4a" stroke-width="1.1"/><path d="M0.8 0.8H7" stroke="#222" stroke-width=".9"/><path d="M1.8 3.6L3.3 5.3 6.2 2.1" fill="none" stroke="#111" stroke-width="1.3"/></svg>
<svg class="a" style="left:30px;top:397.84px" width="11" height="11" viewBox="0 0 11 11"><path d="M0.8 8.8L2.6 5.6H8.2L6.4 8.8z" fill="#fbfbfb" stroke="#8a8a8a" stroke-width=".7"/><path d="M2.6 5.6L4 3.4H9.2L8.2 5.6M9.2 3.4V6.2L6.4 8.8" fill="#e2e2e2" stroke="#8a8a8a" stroke-width=".7"/></svg>
<div class="row" style="left:42px;top:398.84px">Baluster1cut</div>
<svg class="a" style="left:21px;top:408.30px" width="8" height="8"><rect x="0.6" y="0.6" width="6.6" height="6.6" fill="#f7f7f7" stroke="#4a4a4a" stroke-width="1.1"/><path d="M0.8 0.8H7" stroke="#222" stroke-width=".9"/><path d="M1.8 3.6L3.3 5.3 6.2 2.1" fill="none" stroke="#111" stroke-width="1.3"/></svg>
<svg class="a" style="left:30px;top:407.40px" width="11" height="11" viewBox="0 0 11 11"><path d="M0.8 8.8L2.6 5.6H8.2L6.4 8.8z" fill="#fbfbfb" stroke="#8a8a8a" stroke-width=".7"/><path d="M2.6 5.6L4 3.4H9.2L8.2 5.6M9.2 3.4V6.2L6.4 8.8" fill="#e2e2e2" stroke="#8a8a8a" stroke-width=".7"/></svg>
<div class="row" style="left:42px;top:408.40px">Baluster1cut</div>
<svg class="a" style="left:21px;top:417.86px" width="8" height="8"><rect x="0.6" y="0.6" width="6.6" height="6.6" fill="#f7f7f7" stroke="#4a4a4a" stroke-width="1.1"/><path d="M0.8 0.8H7" stroke="#222" stroke-width=".9"/><path d="M1.8 3.6L3.3 5.3 6.2 2.1" fill="none" stroke="#111" stroke-width="1.3"/></svg>
<svg class="a" style="left:30px;top:416.96px" width="11" height="11" viewBox="0 0 11 11"><path d="M0.8 8.8L2.6 5.6H8.2L6.4 8.8z" fill="#fbfbfb" stroke="#8a8a8a" stroke-width=".7"/><path d="M2.6 5.6L4 3.4H9.2L8.2 5.6M9.2 3.4V6.2L6.4 8.8" fill="#e2e2e2" stroke="#8a8a8a" stroke-width=".7"/></svg>
<div class="row" style="left:42px;top:417.96px">BoxNewelcut</div>
<svg class="a" style="left:21px;top:427.42px" width="8" height="8"><rect x="0.6" y="0.6" width="6.6" height="6.6" fill="#f7f7f7" stroke="#4a4a4a" stroke-width="1.1"/><path d="M0.8 0.8H7" stroke="#222" stroke-width=".9"/><path d="M1.8 3.6L3.3 5.3 6.2 2.1" fill="none" stroke="#111" stroke-width="1.3"/></svg>
<svg class="a" style="left:30px;top:426.52px" width="11" height="11" viewBox="0 0 11 11"><path d="M0.8 8.8L2.6 5.6H8.2L6.4 8.8z" fill="#fbfbfb" stroke="#8a8a8a" stroke-width=".7"/><path d="M2.6 5.6L4 3.4H9.2L8.2 5.6M9.2 3.4V6.2L6.4 8.8" fill="#e2e2e2" stroke="#8a8a8a" stroke-width=".7"/></svg>
<div class="row" style="left:42px;top:427.52px">Baluster2cut</div>
<svg class="a" style="left:0px;top:442px" width="6" height="7"><path d="M1.5 0.5L4 3.5 1.5 6.5" fill="none" stroke="#888" stroke-width="1"/></svg>
<svg class="a" style="left:10px;top:441px" width="8" height="8"><rect x="0.6" y="0.6" width="6.6" height="6.6" fill="#f7f7f7" stroke="#4a4a4a" stroke-width="1.1"/><path d="M1.8 3.6L3.3 5.3 6.2 2.1" fill="none" stroke="#111" stroke-width="1.3"/></svg>
<svg class="a" style="left:19px;top:440px" width="9" height="10"><path d="M3 1h3v4H3zM2 6h5v3H2z" fill="#c9c9c9" stroke="#8a8a8a" stroke-width=".8"/></svg>
<div class="row" style="left:31px;top:441px">Machine Configuration</div>
<div class="a" style="left:757px;top:89px;width:5px;height:501px;background:#c9daef"></div>
<div class="a" style="left:187px;top:89px;width:571px;height:500px;background:#6f7c8a"></div>
<div class="a" style="left:188px;top:90px;width:569.5px;height:499px;background:linear-gradient(#0080ff,#bec0c2)"></div>
<div class="a" style="left:757.5px;top:89px;width:1px;height:500px;background:#f4f7fb"></div>
<svg class="a" style="left:188px;top:90px" width="570" height="499" viewBox="188 90 570 499"><defs><clipPath id="sc"><polygon points="417.4,168.0 355.2,222.4 356.0,235.5 344.3,248.2 344.3,260.7 333.0,273.2 333.0,285.7 321.6,298.2 321.6,310.7 310.2,322.0 310.2,334.5 279.5,362.3 283.4,382.6 283.4,395.6 291.2,418.2 291.2,431.2 304.7,453.8 304.7,466.8 326.8,488.0 326.8,501.8 355.3,522.6 355.3,534.3 389.1,551.2 389.1,564.2 429.4,576.5 490.4,508.3 485.2,501.8 487.0,502.0 480.0,499.5 466.0,496.5 455.0,493.5 446.0,482.0 440.0,474.0 430.0,452.0 424.0,438.0 420.0,425.0 417.0,410.0 415.0,395.0 415.0,380.0 419.0,367.0 419.4,353.0 432.3,341.5 432.6,334.5 442.8,318.4 442.8,309.6 454.5,292.0 454.5,289.2 467.6,271.7 467.6,251.0 468.0,250.0 470.0,250.0 490.0,240.5 510.0,231.0 530.0,222.0 549.0,212.5 560.0,207.0 548.0,205.0 548.0,181.0 546.0,179.0 535.0,183.0 528.0,181.0 520.0,185.0 510.0,183.0 500.0,187.0 490.0,185.0 480.0,187.0 468.0,182.0 453.0,179.0"/></clipPath></defs>
<polygon points="417.4,168.0 355.2,222.4 356.0,235.5 344.3,248.2 344.3,260.7 333.0,273.2 333.0,285.7 321.6,298.2 321.6,310.7 310.2,322.0 310.2,334.5 279.5,362.3 283.4,382.6 283.4,395.6 291.2,418.2 291.2,431.2 304.7,453.8 304.7,466.8 326.8,488.0 326.8,501.8 355.3,522.6 355.3,534.3 389.1,551.2 389.1,564.2 429.4,576.5 490.4,508.3 485.2,501.8 487.0,502.0 480.0,499.5 466.0,496.5 455.0,493.5 446.0,482.0 440.0,474.0 430.0,452.0 424.0,438.0 420.0,425.0 417.0,410.0 415.0,395.0 415.0,380.0 419.0,367.0 419.4,353.0 432.3,341.5 432.6,334.5 442.8,318.4 442.8,309.6 454.5,292.0 454.5,289.2 467.6,271.7 467.6,251.0 468.0,250.0 470.0,250.0 490.0,240.5 510.0,231.0 530.0,222.0 549.0,212.5 560.0,207.0 548.0,205.0 548.0,181.0 546.0,179.0 535.0,183.0 528.0,181.0 520.0,185.0 510.0,183.0 500.0,187.0 490.0,185.0 480.0,187.0 468.0,182.0 453.0,179.0" fill="#38706d"/>
<g clip-path="url(#sc)"><polygon points="355.2,222.4 555.2,282.4 555.2,295.9 355.2,235.9" fill="#52a6a2"/><line x1="355.2" y1="223.0" x2="555.2" y2="283.0" stroke="#6cc2bd" stroke-width="1"/><polygon points="344.3,248.2 544.3,300.2 544.3,312.7 344.3,260.7" fill="#52a6a2"/><line x1="344.3" y1="248.79999999999998" x2="544.3" y2="300.79999999999995" stroke="#6cc2bd" stroke-width="1"/><polygon points="333.0,273.2 533.0,323.2 533.0,335.7 333.0,285.7" fill="#52a6a2"/><line x1="333" y1="273.8" x2="533" y2="323.8" stroke="#6cc2bd" stroke-width="1"/><polygon points="321.6,298.2 521.6,341.2 521.6,353.7 321.6,310.7" fill="#52a6a2"/><line x1="321.6" y1="298.8" x2="521.6" y2="341.8" stroke="#6cc2bd" stroke-width="1"/><polygon points="310.2,322.0 510.2,362.0 510.2,374.5 310.2,334.5" fill="#52a6a2"/><line x1="310.2" y1="322.6" x2="510.2" y2="362.6" stroke="#6cc2bd" stroke-width="1"/><polygon points="283.4,382.6 483.4,373.6 483.4,386.6 283.4,395.6" fill="#54a8a4"/><line x1="283.4" y1="383.20000000000005" x2="483.4" y2="374.20000000000005" stroke="#6cc2bd" stroke-width="1"/><polygon points="291.2,418.2 491.2,392.6 491.2,405.6 291.2,431.2" fill="#52a4a0"/><line x1="291.2" y1="418.8" x2="491.2" y2="393.2" stroke="#6cc2bd" stroke-width="1"/><polygon points="304.7,453.8 504.7,411.8 504.7,424.8 304.7,466.8" fill="#50a09b"/><line x1="304.7" y1="454.40000000000003" x2="504.7" y2="412.40000000000003" stroke="#6cc2bd" stroke-width="1"/><polygon points="326.8,488.0 526.8,424.0 526.8,437.8 326.8,501.8" fill="#4d9a95"/><line x1="326.8" y1="488.6" x2="526.8" y2="424.6" stroke="#6cc2bd" stroke-width="1"/><polygon points="355.3,522.6 555.3,412.6 555.3,424.3 355.3,534.3" fill="#4a938e"/><line x1="355.3" y1="523.2" x2="555.3" y2="413.20000000000005" stroke="#6cc2bd" stroke-width="1"/><polygon points="389.1,551.2 589.1,405.2 589.1,418.2 389.1,564.2" fill="#3c7a75"/><line x1="389.1" y1="551.8000000000001" x2="589.1" y2="405.80000000000007" stroke="#6cc2bd" stroke-width="1"/><polyline points="389.1,564.2 429.4,576.5 490.4,508.3" fill="none" stroke="#52a6a2" stroke-width="2.5"/></g>
<polygon points="566.0,206.0 567.0,168.0 574.0,166.0 574.0,163.0 581.0,161.0 581.0,158.0 588.0,156.0 588.0,153.0 595.0,151.0 595.0,148.5 606.0,148.5 622.8,150.3 560.6,204.7" fill="#38706d"/>
<polygon points="622.8,150.3 666.7,163.6 603.8,217.4 560.6,204.7" fill="#c2c2c2"/>
<polyline points="560.6,205.2 603.8,218.0 666.7,164.2" fill="none" stroke="#e8e8e8" stroke-width="1.6"/>
<line x1="468.5" y1="240.9" x2="468.5" y2="250.9" stroke="#4a9c97" stroke-width="1.5"/>
<polygon points="464.5,238.9 490.1,245.7 490.1,248.2 464.5,241.4" fill="#4fa6a0"/>
<line x1="488.4" y1="231.8" x2="488.4" y2="241.8" stroke="#4a9c97" stroke-width="1.5"/>
<polygon points="484.4,229.8 510.0,236.6 510.0,239.1 484.4,232.3" fill="#4fa6a0"/>
<line x1="508.3" y1="222.7" x2="508.3" y2="232.7" stroke="#4a9c97" stroke-width="1.5"/>
<polygon points="504.3,220.7 529.3,227.5 529.3,230.0 504.3,223.2" fill="#4fa6a0"/>
<line x1="528.2" y1="213.6" x2="528.2" y2="223.6" stroke="#4a9c97" stroke-width="1.5"/>
<polygon points="524.2,211.6 549.2,218.4 549.2,220.9 524.2,214.1" fill="#4fa6a0"/>
<line x1="548.1" y1="203.9" x2="548.1" y2="213.9" stroke="#4a9c97" stroke-width="1.5"/>
<polygon points="544.1,201.9 560.0,206.0 560.0,208.5 544.1,204.4" fill="#4fa6a0"/>
<rect x="473.1" y="169" width="2.9" height="56.0" fill="#f0f0f0"/><rect x="475.1" y="169" width="0.8" height="56.0" fill="#c9c9c9"/><rect x="471.9" y="225" width="5.2" height="11.6" fill="#f2f2f2"/><rect x="475.6" y="225" width="1.5" height="11.6" fill="#cfcfcf"/><rect x="472.4" y="223" width="4.2" height="2" fill="#e2e2e2"/>
<rect x="482.6" y="165" width="2.9" height="55.7" fill="#f0f0f0"/><rect x="484.6" y="165" width="0.8" height="55.7" fill="#c9c9c9"/><rect x="481.4" y="220.7" width="5.2" height="18.7" fill="#f2f2f2"/><rect x="485.1" y="220.7" width="1.5" height="18.7" fill="#cfcfcf"/><rect x="481.9" y="218.7" width="4.2" height="2" fill="#e2e2e2"/>
<rect x="492.6" y="160.5" width="2.9" height="55.5" fill="#f0f0f0"/><rect x="494.6" y="160.5" width="0.8" height="55.5" fill="#c9c9c9"/><rect x="491.4" y="216" width="5.2" height="11.5" fill="#f2f2f2"/><rect x="495.1" y="216" width="1.5" height="11.5" fill="#cfcfcf"/><rect x="491.9" y="214" width="4.2" height="2" fill="#e2e2e2"/>
<rect x="502.9" y="156" width="2.9" height="55.6" fill="#f0f0f0"/><rect x="504.9" y="156" width="0.8" height="55.6" fill="#c9c9c9"/><rect x="501.7" y="211.6" width="5.2" height="18.7" fill="#f2f2f2"/><rect x="505.4" y="211.6" width="1.5" height="18.7" fill="#cfcfcf"/><rect x="502.2" y="209.6" width="4.2" height="2" fill="#e2e2e2"/>
<rect x="512.5" y="151.4" width="2.9" height="55.1" fill="#f0f0f0"/><rect x="514.7" y="151.4" width="0.8" height="55.1" fill="#c9c9c9"/><rect x="511.4" y="206.5" width="5.2" height="11.9" fill="#f2f2f2"/><rect x="515.1" y="206.5" width="1.5" height="11.9" fill="#cfcfcf"/><rect x="511.9" y="204.5" width="4.2" height="2" fill="#e2e2e2"/>
<rect x="522.1" y="147" width="2.9" height="55.5" fill="#f0f0f0"/><rect x="524.3" y="147" width="0.8" height="55.5" fill="#c9c9c9"/><rect x="521.0" y="202.5" width="5.2" height="18.7" fill="#f2f2f2"/><rect x="524.7" y="202.5" width="1.5" height="18.7" fill="#cfcfcf"/><rect x="521.5" y="200.5" width="4.2" height="2" fill="#e2e2e2"/>
<rect x="532.4" y="142.3" width="2.9" height="54.5" fill="#f0f0f0"/><rect x="534.6" y="142.3" width="0.8" height="54.5" fill="#c9c9c9"/><rect x="531.3" y="196.8" width="5.2" height="12.5" fill="#f2f2f2"/><rect x="535.0" y="196.8" width="1.5" height="12.5" fill="#cfcfcf"/><rect x="531.8" y="194.8" width="4.2" height="2" fill="#e2e2e2"/>
<rect x="541.5" y="137.8" width="2.9" height="54.5" fill="#f0f0f0"/><rect x="543.7" y="137.8" width="0.8" height="54.5" fill="#c9c9c9"/><rect x="540.4" y="192.3" width="5.2" height="19.7" fill="#f2f2f2"/><rect x="544.1" y="192.3" width="1.5" height="19.7" fill="#cfcfcf"/><rect x="540.9" y="190.3" width="4.2" height="2" fill="#e2e2e2"/>
<rect x="546.5" y="177" width="20.5" height="27.69999999999999" fill="#f1f1f1"/><rect x="563" y="177" width="4" height="27.69999999999999" fill="#cfcfcf"/><rect x="548.0" y="113" width="17.5" height="60" fill="#f4f4f4"/><rect x="562" y="113" width="3.5" height="60" fill="#d6d6d6"/><rect x="549.5" y="116" width="0.8" height="54" fill="#d8d8d8"/><rect x="545.7" y="173" width="22.1" height="4" fill="#e6e6e6"/><rect x="545.7" y="173" width="22.1" height="1" fill="#fafafa"/><polygon points="544.3,106.4 552.6,103.4 569.2,105.4 569.2,111.0 556.8,113.0 544.3,111.0" fill="#ededed"/><polygon points="548.5,105.9 553.7,104.2 566.0,105.4 558.8,107.4" fill="#d9d9d9"/><rect x="546.5" y="110.5" width="20.5" height="2.5" fill="#f7f7f7"/>
<rect x="452" y="222" width="16.30000000000001" height="29" fill="#f1f1f1"/><rect x="464.3" y="222" width="4" height="29" fill="#cfcfcf"/><rect x="453.5" y="158.5" width="13.300000000000011" height="58.5" fill="#f4f4f4"/><rect x="463.3" y="158.5" width="3.5" height="58.5" fill="#d6d6d6"/><rect x="455" y="161.5" width="0.8" height="52.5" fill="#d8d8d8"/><rect x="451.2" y="217" width="17.900000000000013" height="5" fill="#e6e6e6"/><rect x="451.2" y="217" width="17.900000000000013" height="1" fill="#fafafa"/><polygon points="449.8,152.7 456.9,149.7 470.5,151.7 470.5,156.5 460.1,158.5 449.8,156.5" fill="#ededed"/><polygon points="454.0,152.2 457.7,150.5 467.3,151.7 461.8,153.7" fill="#d9d9d9"/><rect x="452" y="156.0" width="16.30000000000001" height="2.5" fill="#f7f7f7"/>
<polygon points="462.0,161.0 546.0,128.5 548.0,136.0 465.0,169.0" fill="#3f9b94"/>
<polygon points="462.0,161.0 546.0,128.5 547.0,131.5 463.0,164.5" fill="#52b3ab"/>
<rect x="417.1" y="273" width="2.9" height="57.0" fill="#f0f0f0"/><rect x="419.1" y="273" width="0.8" height="57.0" fill="#c9c9c9"/><rect x="415.9" y="330" width="5.2" height="15.0" fill="#f2f2f2"/><rect x="419.6" y="330" width="1.5" height="15.0" fill="#cfcfcf"/><rect x="416.4" y="328" width="4.2" height="2" fill="#e2e2e2"/>
<rect x="422.8" y="261.7" width="2.9" height="48.7" fill="#f0f0f0"/><rect x="424.8" y="261.7" width="0.8" height="48.7" fill="#c9c9c9"/><rect x="421.6" y="310.4" width="5.2" height="12.9" fill="#f2f2f2"/><rect x="425.3" y="310.4" width="1.5" height="12.9" fill="#cfcfcf"/><rect x="422.1" y="308.4" width="4.2" height="2" fill="#e2e2e2"/>
<rect x="428.4" y="249.5" width="2.9" height="48.5" fill="#f0f0f0"/><rect x="430.5" y="249.5" width="0.8" height="48.5" fill="#c9c9c9"/><rect x="427.3" y="298" width="5.2" height="20.5" fill="#f2f2f2"/><rect x="431.0" y="298" width="1.5" height="20.5" fill="#cfcfcf"/><rect x="427.8" y="296" width="4.2" height="2" fill="#e2e2e2"/>
<rect x="434.2" y="238" width="2.9" height="48.0" fill="#f0f0f0"/><rect x="436.2" y="238" width="0.8" height="48.0" fill="#c9c9c9"/><rect x="433.0" y="286" width="5.2" height="12.0" fill="#f2f2f2"/><rect x="436.7" y="286" width="1.5" height="12.0" fill="#cfcfcf"/><rect x="433.5" y="284" width="4.2" height="2" fill="#e2e2e2"/>
<rect x="439.9" y="226" width="2.9" height="47.8" fill="#f0f0f0"/><rect x="441.9" y="226" width="0.8" height="47.8" fill="#c9c9c9"/><rect x="438.7" y="273.8" width="5.2" height="19.5" fill="#f2f2f2"/><rect x="442.4" y="273.8" width="1.5" height="19.5" fill="#cfcfcf"/><rect x="439.2" y="271.8" width="4.2" height="2" fill="#e2e2e2"/>
<rect x="445.6" y="213" width="2.9" height="48.7" fill="#f0f0f0"/><rect x="447.6" y="213" width="0.8" height="48.7" fill="#c9c9c9"/><rect x="444.4" y="261.7" width="5.2" height="12.1" fill="#f2f2f2"/><rect x="448.1" y="261.7" width="1.5" height="12.1" fill="#cfcfcf"/><rect x="444.9" y="259.7" width="4.2" height="2" fill="#e2e2e2"/>
<rect x="451.2" y="201" width="2.9" height="48.5" fill="#f0f0f0"/><rect x="453.2" y="201" width="0.8" height="48.5" fill="#c9c9c9"/><rect x="450.0" y="249.5" width="5.2" height="19.5" fill="#f2f2f2"/><rect x="453.7" y="249.5" width="1.5" height="19.5" fill="#cfcfcf"/><rect x="450.5" y="247.5" width="4.2" height="2" fill="#e2e2e2"/>
<path d="M460 178 C450 198 432 228 422 249 S414 266 412 275" fill="none" stroke="#36918a" stroke-width="7" stroke-linecap="round"/>
<path d="M460.5 177.5 C450.5 197.5 432.5 227.5 422.5 248.5 S414.5 265.5 412.5 274.5" fill="none" stroke="#4fb0a8" stroke-width="4"/>
<rect x="395.6" y="345" width="2.9" height="39.0" fill="#f0f0f0"/><rect x="397.6" y="345" width="0.8" height="39.0" fill="#c9c9c9"/><rect x="394.4" y="384" width="5.2" height="8.0" fill="#f2f2f2"/><rect x="398.1" y="384" width="1.5" height="8.0" fill="#cfcfcf"/><rect x="394.9" y="382" width="4.2" height="2" fill="#e2e2e2"/>
<rect x="400.4" y="350" width="2.9" height="42.0" fill="#f0f0f0"/><rect x="402.4" y="350" width="0.8" height="42.0" fill="#c9c9c9"/><rect x="399.2" y="392" width="5.2" height="9.0" fill="#f2f2f2"/><rect x="402.9" y="392" width="1.5" height="9.0" fill="#cfcfcf"/><rect x="399.7" y="390" width="4.2" height="2" fill="#e2e2e2"/>
<rect x="404.8" y="355" width="2.9" height="49.0" fill="#f0f0f0"/><rect x="406.8" y="355" width="0.8" height="49.0" fill="#c9c9c9"/><rect x="403.6" y="404" width="5.2" height="15.0" fill="#f2f2f2"/><rect x="407.3" y="404" width="1.5" height="15.0" fill="#cfcfcf"/><rect x="404.1" y="402" width="4.2" height="2" fill="#e2e2e2"/>
<rect x="409.4" y="362" width="2.9" height="52.0" fill="#f0f0f0"/><rect x="411.4" y="362" width="0.8" height="52.0" fill="#c9c9c9"/><rect x="408.2" y="414" width="5.2" height="13.0" fill="#f2f2f2"/><rect x="411.9" y="414" width="1.5" height="13.0" fill="#cfcfcf"/><rect x="408.7" y="412" width="4.2" height="2" fill="#e2e2e2"/>
<rect x="414.1" y="372" width="2.9" height="56.8" fill="#f0f0f0"/><rect x="416.1" y="372" width="0.8" height="56.8" fill="#c9c9c9"/><rect x="412.9" y="428.8" width="5.2" height="18.7" fill="#f2f2f2"/><rect x="416.6" y="428.8" width="1.5" height="18.7" fill="#cfcfcf"/><rect x="413.4" y="426.8" width="4.2" height="2" fill="#e2e2e2"/>
<rect x="420.4" y="388" width="2.9" height="53.0" fill="#f0f0f0"/><rect x="422.4" y="388" width="0.8" height="53.0" fill="#c9c9c9"/><rect x="419.2" y="441" width="5.2" height="12.0" fill="#f2f2f2"/><rect x="422.9" y="441" width="1.5" height="12.0" fill="#cfcfcf"/><rect x="419.7" y="439" width="4.2" height="2" fill="#e2e2e2"/>
<rect x="427.6" y="403" width="2.9" height="50.0" fill="#f0f0f0"/><rect x="429.6" y="403" width="0.8" height="50.0" fill="#c9c9c9"/><rect x="426.4" y="453" width="5.2" height="19.5" fill="#f2f2f2"/><rect x="430.1" y="453" width="1.5" height="19.5" fill="#cfcfcf"/><rect x="426.9" y="451" width="4.2" height="2" fill="#e2e2e2"/>
<rect x="434.6" y="416" width="2.9" height="48.5" fill="#f0f0f0"/><rect x="436.6" y="416" width="0.8" height="48.5" fill="#c9c9c9"/><rect x="433.4" y="464.5" width="5.2" height="12.5" fill="#f2f2f2"/><rect x="437.1" y="464.5" width="1.5" height="12.5" fill="#cfcfcf"/><rect x="433.9" y="462.5" width="4.2" height="2" fill="#e2e2e2"/>
<rect x="443.6" y="427" width="2.9" height="50.0" fill="#f0f0f0"/><rect x="445.6" y="427" width="0.8" height="50.0" fill="#c9c9c9"/><rect x="442.4" y="477" width="5.2" height="18.7" fill="#f2f2f2"/><rect x="446.1" y="477" width="1.5" height="18.7" fill="#cfcfcf"/><rect x="442.9" y="475" width="4.2" height="2" fill="#e2e2e2"/>
<rect x="452.6" y="433" width="2.9" height="53.8" fill="#f0f0f0"/><rect x="454.6" y="433" width="0.8" height="53.8" fill="#c9c9c9"/><rect x="451.4" y="486.8" width="5.2" height="12.5" fill="#f2f2f2"/><rect x="455.1" y="486.8" width="1.5" height="12.5" fill="#cfcfcf"/><rect x="451.9" y="484.8" width="4.2" height="2" fill="#e2e2e2"/>
<rect x="461.4" y="434" width="2.9" height="53.7" fill="#f0f0f0"/><rect x="463.5" y="434" width="0.8" height="53.7" fill="#c9c9c9"/><rect x="460.3" y="487.7" width="5.2" height="18.7" fill="#f2f2f2"/><rect x="464.0" y="487.7" width="1.5" height="18.7" fill="#cfcfcf"/><rect x="460.8" y="485.7" width="4.2" height="2" fill="#e2e2e2"/>
<rect x="466.6" y="434" width="2.9" height="61.7" fill="#f0f0f0"/><rect x="468.6" y="434" width="0.8" height="61.7" fill="#c9c9c9"/><rect x="465.4" y="495.7" width="5.2" height="21.3" fill="#f2f2f2"/><rect x="469.1" y="495.7" width="1.5" height="21.3" fill="#cfcfcf"/><rect x="465.9" y="493.7" width="4.2" height="2" fill="#e2e2e2"/>
<rect x="471.2" y="433" width="2.9" height="52.0" fill="#f0f0f0"/><rect x="473.3" y="433" width="0.8" height="52.0" fill="#c9c9c9"/><rect x="470.1" y="485" width="5.2" height="25.0" fill="#f2f2f2"/><rect x="473.8" y="485" width="1.5" height="25.0" fill="#cfcfcf"/><rect x="470.6" y="483" width="4.2" height="2" fill="#e2e2e2"/>
<rect x="477.6" y="433" width="2.9" height="58.0" fill="#f0f0f0"/><rect x="479.6" y="433" width="0.8" height="58.0" fill="#c9c9c9"/><rect x="476.4" y="491" width="5.2" height="21.0" fill="#f2f2f2"/><rect x="480.1" y="491" width="1.5" height="21.0" fill="#cfcfcf"/><rect x="476.9" y="489" width="4.2" height="2" fill="#e2e2e2"/>
<rect x="396" y="344.7" width="16.5" height="15.300000000000011" fill="#f1f1f1"/><rect x="408.5" y="344.7" width="4" height="15.300000000000011" fill="#cfcfcf"/><rect x="397.5" y="282" width="13.5" height="55" fill="#f4f4f4"/><rect x="407.5" y="282" width="3.5" height="55" fill="#d6d6d6"/><rect x="399" y="285" width="0.8" height="49" fill="#d8d8d8"/><rect x="395.2" y="337" width="18.1" height="7.699999999999989" fill="#e6e6e6"/><rect x="395.2" y="337" width="18.1" height="1" fill="#fafafa"/><polygon points="393.8,276.0 400.9,273.0 414.7,275.0 414.7,280.0 404.2,282.0 393.8,280.0" fill="#ededed"/><polygon points="398.0,275.5 401.8,273.8 411.5,275.0 405.9,277.0" fill="#d9d9d9"/><rect x="396" y="279.5" width="16.5" height="2.5" fill="#f7f7f7"/>
<path d="M399 302 C400 330 405 352 413 370 C423 392 437 410 453 423 C459 428 463 430 469 430" fill="none" stroke="#36918a" stroke-width="7.5" stroke-linecap="round"/>
<path d="M399.7 302 C400.7 330 405.7 351.5 413.7 369.5 C423.7 391.5 437.7 409 453.5 422" fill="none" stroke="#4fb0a8" stroke-width="4.5"/>
<ellipse cx="470.5" cy="425" rx="12" ry="8.5" fill="#36918a"/>
<ellipse cx="470.5" cy="424" rx="9.5" ry="6" fill="#4aa8a0"/>
<ellipse cx="471" cy="423.5" rx="5" ry="3" fill="#3a948d"/>
<ellipse cx="471" cy="423" rx="2.5" ry="1.6" fill="#56b8b0"/></svg>
<div class="a" style="left:761px;top:89px;width:364px;height:15px;background:linear-gradient(#e2ebf7,#c3d3e8);border-top:1px solid #f4f7fb"></div>
<div class="t" style="left:765px;top:92.6px;font-size:7.2px;color:#1f3a6b;font-weight:bold">Front</div>
<div class="a" style="left:761.5px;top:103px;width:364px;height:486px;background:#5a5a5a"></div>
<div class="a" style="left:762.3px;top:104px;width:363px;height:485px;background:#1e1e1e"></div>
<svg class="a" style="left:762px;top:104px" width="363" height="485" viewBox="762 104 363 485"><line x1="1063.0" y1="237.6" x2="1125.0" y2="237.6" stroke="#e8e8e8" stroke-width="0.8"/>
<line x1="1063.0" y1="240.2" x2="1125.0" y2="240.2" stroke="#e8e8e8" stroke-width="0.8"/>
<line x1="783.0" y1="339.5" x2="934.0" y2="339.5" stroke="#4fb3ae" stroke-width="1"/>
<line x1="783.0" y1="342.7" x2="934.0" y2="342.7" stroke="#4fb3ae" stroke-width="1"/>
<line x1="783.0" y1="360.6" x2="934.0" y2="360.6" stroke="#4fb3ae" stroke-width="1"/>
<line x1="783.0" y1="363.3" x2="934.0" y2="363.3" stroke="#4fb3ae" stroke-width="1"/>
<line x1="783.0" y1="381.3" x2="934.0" y2="381.3" stroke="#4fb3ae" stroke-width="1"/>
<line x1="783.0" y1="383.4" x2="934.0" y2="383.4" stroke="#4fb3ae" stroke-width="1"/>
<line x1="783.0" y1="401.7" x2="934.0" y2="401.7" stroke="#4fb3ae" stroke-width="1"/>
<line x1="783.0" y1="404.3" x2="934.0" y2="404.3" stroke="#4fb3ae" stroke-width="1"/>
<line x1="783.0" y1="421.8" x2="934.0" y2="421.8" stroke="#4fb3ae" stroke-width="1"/>
<line x1="783.0" y1="425.0" x2="934.0" y2="425.0" stroke="#4fb3ae" stroke-width="1"/>
<line x1="783.0" y1="441.8" x2="934.0" y2="441.8" stroke="#4fb3ae" stroke-width="1"/>
<line x1="783.0" y1="445.0" x2="934.0" y2="445.0" stroke="#4fb3ae" stroke-width="1"/>
<line x1="783.5" y1="339.5" x2="783.5" y2="445.0" stroke="#4fb3ae" stroke-width="1"/>
<line x1="943.0" y1="339.5" x2="934.0" y2="339.5" stroke="#4fb3ae" stroke-width="1"/>
<rect x="809.8" y="443.9" width="122.2" height="21.1" rx="0" fill="none" stroke="#4fb3ae" stroke-width="1"/>
<line x1="809.8" y1="446.4" x2="935.0" y2="446.4" stroke="#4fb3ae" stroke-width="1"/>
<rect x="843.6" y="465.0" width="103.4" height="21.0" rx="0" fill="none" stroke="#4fb3ae" stroke-width="1"/>
<line x1="843.6" y1="467.5" x2="950.0" y2="467.5" stroke="#4fb3ae" stroke-width="1"/>
<rect x="883.7" y="486.0" width="86.3" height="19.0" rx="0" fill="none" stroke="#4fb3ae" stroke-width="1"/>
<line x1="883.7" y1="488.5" x2="973.0" y2="488.5" stroke="#4fb3ae" stroke-width="1"/>
<rect x="928.8" y="505.0" width="66.7" height="21.0" rx="0" fill="none" stroke="#4fb3ae" stroke-width="1"/>
<line x1="928.8" y1="507.5" x2="998.5" y2="507.5" stroke="#4fb3ae" stroke-width="1"/>
<rect x="978.6" y="526.0" width="44.4" height="21.0" rx="0" fill="none" stroke="#4fb3ae" stroke-width="1"/>
<line x1="978.6" y1="528.5" x2="1026.0" y2="528.5" stroke="#4fb3ae" stroke-width="1"/>
<rect x="1014.5" y="547.0" width="33.5" height="19.0" rx="0" fill="none" stroke="#4fb3ae" stroke-width="1"/>
<line x1="1014.5" y1="549.5" x2="1051.0" y2="549.5" stroke="#4fb3ae" stroke-width="1"/>
<rect x="1028.4" y="564.5" width="61.0" height="2.5" rx="1" fill="none" stroke="#4fb3ae" stroke-width="1"/>
<rect x="935.0" y="319.0" width="34.2" height="3.5" rx="1.5" fill="none" stroke="#4fb3ae" stroke-width="1"/>
<rect x="962.0" y="298.4" width="34.4" height="3.5" rx="1.5" fill="none" stroke="#4fb3ae" stroke-width="1"/>
<rect x="989.6" y="278.4" width="35.1" height="3.5" rx="1.5" fill="none" stroke="#4fb3ae" stroke-width="1"/>
<rect x="1016.5" y="258.0" width="35.1" height="3.5" rx="1.5" fill="none" stroke="#4fb3ae" stroke-width="1"/>
<rect x="1045.0" y="239.5" width="19.6" height="3.5" rx="1.5" fill="none" stroke="#4fb3ae" stroke-width="1"/>
<line x1="938.0" y1="322.8" x2="938.0" y2="342.0" stroke="#4fb3ae" stroke-width="1"/>
<line x1="940.0" y1="322.8" x2="940.0" y2="342.0" stroke="#4fb3ae" stroke-width="0.7"/>
<line x1="966.2" y1="302.0" x2="966.2" y2="319.0" stroke="#4fb3ae" stroke-width="1"/>
<line x1="968.2" y1="302.0" x2="968.2" y2="319.0" stroke="#4fb3ae" stroke-width="0.7"/>
<line x1="993.5" y1="281.5" x2="993.5" y2="298.4" stroke="#4fb3ae" stroke-width="1"/>
<line x1="995.5" y1="281.5" x2="995.5" y2="298.4" stroke="#4fb3ae" stroke-width="0.7"/>
<line x1="1020.8" y1="261.0" x2="1020.8" y2="278.4" stroke="#4fb3ae" stroke-width="1"/>
<line x1="1022.8" y1="261.0" x2="1022.8" y2="278.4" stroke="#4fb3ae" stroke-width="0.7"/>
<line x1="1048.0" y1="242.0" x2="1048.0" y2="258.0" stroke="#4fb3ae" stroke-width="1"/>
<line x1="1050.0" y1="242.0" x2="1050.0" y2="258.0" stroke="#4fb3ae" stroke-width="0.7"/>
<line x1="940.1" y1="221.7" x2="940.1" y2="319.0" stroke="#e8e8e8" stroke-width="0.8"/>
<line x1="943.7" y1="221.7" x2="943.7" y2="319.0" stroke="#e8e8e8" stroke-width="0.8"/>
<ellipse cx="941.9" cy="246.0" rx="2.4" ry="1.6" fill="none" stroke="#e8e8e8" stroke-width="0.8"/>
<rect x="939.7" y="291.8" width="4.4" height="2.5" fill="none" stroke="#e8e8e8" stroke-width="0.8"/>
<line x1="941.9" y1="248.0" x2="941.9" y2="290.8" stroke="#e8e8e8" stroke-width="2.4" stroke-dasharray="1.2 1"/>
<line x1="939.5" y1="318.6" x2="944.3" y2="318.6" stroke="#e8e8e8" stroke-width="0.8"/>
<line x1="954.0" y1="212.0" x2="954.0" y2="319.0" stroke="#e8e8e8" stroke-width="0.8"/>
<line x1="957.6" y1="212.0" x2="957.6" y2="319.0" stroke="#e8e8e8" stroke-width="0.8"/>
<ellipse cx="955.8" cy="238.8" rx="2.4" ry="1.6" fill="none" stroke="#e8e8e8" stroke-width="0.8"/>
<rect x="953.6" y="289.0" width="4.4" height="2.5" fill="none" stroke="#e8e8e8" stroke-width="0.8"/>
<line x1="953.4" y1="318.6" x2="958.2" y2="318.6" stroke="#e8e8e8" stroke-width="0.8"/>
<line x1="967.5" y1="202.3" x2="967.5" y2="298.4" stroke="#e8e8e8" stroke-width="0.8"/>
<line x1="971.1" y1="202.3" x2="971.1" y2="298.4" stroke="#e8e8e8" stroke-width="0.8"/>
<ellipse cx="969.3" cy="226.3" rx="2.4" ry="1.6" fill="none" stroke="#e8e8e8" stroke-width="0.8"/>
<rect x="967.1" y="271.5" width="4.4" height="2.5" fill="none" stroke="#e8e8e8" stroke-width="0.8"/>
<line x1="969.3" y1="228.3" x2="969.3" y2="270.5" stroke="#e8e8e8" stroke-width="2.4" stroke-dasharray="1.2 1"/>
<line x1="966.9" y1="298.0" x2="971.7" y2="298.0" stroke="#e8e8e8" stroke-width="0.8"/>
<line x1="981.0" y1="192.5" x2="981.0" y2="298.4" stroke="#e8e8e8" stroke-width="0.8"/>
<line x1="984.6" y1="192.5" x2="984.6" y2="298.4" stroke="#e8e8e8" stroke-width="0.8"/>
<ellipse cx="982.8" cy="219.0" rx="2.4" ry="1.6" fill="none" stroke="#e8e8e8" stroke-width="0.8"/>
<rect x="980.6" y="268.7" width="4.4" height="2.5" fill="none" stroke="#e8e8e8" stroke-width="0.8"/>
<line x1="980.4" y1="298.0" x2="985.2" y2="298.0" stroke="#e8e8e8" stroke-width="0.8"/>
<line x1="994.5" y1="182.8" x2="994.5" y2="278.4" stroke="#e8e8e8" stroke-width="0.8"/>
<line x1="998.1" y1="182.8" x2="998.1" y2="278.4" stroke="#e8e8e8" stroke-width="0.8"/>
<ellipse cx="996.3" cy="206.7" rx="2.4" ry="1.6" fill="none" stroke="#e8e8e8" stroke-width="0.8"/>
<rect x="994.1" y="251.6" width="4.4" height="2.5" fill="none" stroke="#e8e8e8" stroke-width="0.8"/>
<line x1="996.3" y1="208.7" x2="996.3" y2="250.6" stroke="#e8e8e8" stroke-width="2.4" stroke-dasharray="1.2 1"/>
<line x1="993.9" y1="278.0" x2="998.7" y2="278.0" stroke="#e8e8e8" stroke-width="0.8"/>
<line x1="1008.4" y1="173.0" x2="1008.4" y2="278.4" stroke="#e8e8e8" stroke-width="0.8"/>
<line x1="1012.0" y1="173.0" x2="1012.0" y2="278.4" stroke="#e8e8e8" stroke-width="0.8"/>
<ellipse cx="1010.2" cy="199.3" rx="2.4" ry="1.6" fill="none" stroke="#e8e8e8" stroke-width="0.8"/>
<rect x="1008.0" y="248.9" width="4.4" height="2.5" fill="none" stroke="#e8e8e8" stroke-width="0.8"/>
<line x1="1007.8" y1="278.0" x2="1012.6" y2="278.0" stroke="#e8e8e8" stroke-width="0.8"/>
<line x1="1022.1" y1="162.0" x2="1022.1" y2="258.0" stroke="#e8e8e8" stroke-width="0.8"/>
<line x1="1025.7" y1="162.0" x2="1025.7" y2="258.0" stroke="#e8e8e8" stroke-width="0.8"/>
<ellipse cx="1023.9" cy="186.0" rx="2.4" ry="1.6" fill="none" stroke="#e8e8e8" stroke-width="0.8"/>
<rect x="1021.7" y="231.1" width="4.4" height="2.5" fill="none" stroke="#e8e8e8" stroke-width="0.8"/>
<line x1="1023.9" y1="188.0" x2="1023.9" y2="230.1" stroke="#e8e8e8" stroke-width="2.4" stroke-dasharray="1.2 1"/>
<line x1="1021.5" y1="257.6" x2="1026.3" y2="257.6" stroke="#e8e8e8" stroke-width="0.8"/>
<line x1="1035.7" y1="151.1" x2="1035.7" y2="258.0" stroke="#e8e8e8" stroke-width="0.8"/>
<line x1="1039.3" y1="151.1" x2="1039.3" y2="258.0" stroke="#e8e8e8" stroke-width="0.8"/>
<ellipse cx="1037.5" cy="177.8" rx="2.4" ry="1.6" fill="none" stroke="#e8e8e8" stroke-width="0.8"/>
<rect x="1035.3" y="228.1" width="4.4" height="2.5" fill="none" stroke="#e8e8e8" stroke-width="0.8"/>
<line x1="1035.1" y1="257.6" x2="1039.9" y2="257.6" stroke="#e8e8e8" stroke-width="0.8"/>
<polygon points="929,221 1047,139 1049,146 931,228" fill="none" stroke="#4fb3ae" stroke-width="1"/>
<line x1="930" y1="224.5" x2="1048" y2="142.5" stroke="#4fb3ae" stroke-width="1.8" stroke-dasharray="1.2 1"/>
<path d="M929 221 L921 221 L921 227 L931 228" fill="none" stroke="#4fb3ae" stroke-width="1"/>
<rect x="1045.5" y="107.3" width="20.1" height="3.5" rx="1" fill="none" stroke="#e8e8e8" stroke-width="0.9"/>
<rect x="1046.5" y="110.8" width="18.1" height="3.0" rx="0" fill="none" stroke="#e8e8e8" stroke-width="0.8"/>
<line x1="1048.5" y1="113.8" x2="1048.5" y2="129.2" stroke="#e8e8e8" stroke-width="0.8"/>
<line x1="1062.6" y1="113.8" x2="1062.6" y2="129.2" stroke="#e8e8e8" stroke-width="0.8"/>
<line x1="1050.5" y1="113.8" x2="1050.5" y2="129.2" stroke="#e8e8e8" stroke-width="0.8"/>
<line x1="1060.6" y1="113.8" x2="1060.6" y2="129.2" stroke="#e8e8e8" stroke-width="0.8"/>
<rect x="1046.0" y="129.2" width="19.1" height="4.0" rx="0" fill="none" stroke="#e8e8e8" stroke-width="0.9"/>
<line x1="1047.0" y1="133.2" x2="1047.0" y2="196.0" stroke="#e8e8e8" stroke-width="0.8"/>
<line x1="1064.1" y1="133.2" x2="1064.1" y2="196.0" stroke="#e8e8e8" stroke-width="0.8"/>
<line x1="1049.0" y1="133.2" x2="1049.0" y2="196.0" stroke="#e8e8e8" stroke-width="0.8"/>
<line x1="1062.1" y1="133.2" x2="1062.1" y2="196.0" stroke="#e8e8e8" stroke-width="0.8"/>
<rect x="1051.5" y="136.2" width="8.1" height="55.8" rx="2" fill="none" stroke="#e8e8e8" stroke-width="0.8"/>
<rect x="1045.0" y="196.0" width="21.1" height="5.0" rx="1" fill="none" stroke="#e8e8e8" stroke-width="0.9"/>
<line x1="1047.0" y1="201.0" x2="1047.0" y2="238.8" stroke="#e8e8e8" stroke-width="0.8"/>
<line x1="1064.1" y1="201.0" x2="1064.1" y2="238.8" stroke="#e8e8e8" stroke-width="0.8"/>
<line x1="1049.5" y1="201.0" x2="1049.5" y2="238.8" stroke="#e8e8e8" stroke-width="0.8"/>
<line x1="1061.6" y1="201.0" x2="1061.6" y2="238.8" stroke="#e8e8e8" stroke-width="0.8"/>
<rect x="1044" y="236.5" width="25" height="3.5" rx="1.5" fill="none" stroke="#4fb3ae" stroke-width="1.2"/>
<rect x="912.6" y="210.8" width="19.8" height="4.0" rx="1" fill="none" stroke="#e8e8e8" stroke-width="0.9"/>
<rect x="913.6" y="214.8" width="17.8" height="3.0" rx="0" fill="none" stroke="#e8e8e8" stroke-width="0.8"/>
<line x1="915.6" y1="217.8" x2="915.6" y2="231.5" stroke="#e8e8e8" stroke-width="0.8"/>
<line x1="918.1" y1="217.8" x2="918.1" y2="231.5" stroke="#e8e8e8" stroke-width="0.8"/>
<line x1="926.9" y1="217.8" x2="926.9" y2="231.5" stroke="#e8e8e8" stroke-width="0.8"/>
<line x1="929.4" y1="217.8" x2="929.4" y2="231.5" stroke="#e8e8e8" stroke-width="0.8"/>
<rect x="913.1" y="231.5" width="18.8" height="4.0" rx="0" fill="none" stroke="#e8e8e8" stroke-width="0.9"/>
<line x1="914.1" y1="235.5" x2="914.1" y2="298.4" stroke="#e8e8e8" stroke-width="0.8"/>
<line x1="916.1" y1="235.5" x2="916.1" y2="298.4" stroke="#e8e8e8" stroke-width="0.8"/>
<line x1="928.9" y1="235.5" x2="928.9" y2="298.4" stroke="#e8e8e8" stroke-width="0.8"/>
<line x1="930.9" y1="235.5" x2="930.9" y2="298.4" stroke="#e8e8e8" stroke-width="0.8"/>
<rect x="919.5" y="240" width="6" height="95" fill="none" stroke="#4fb3ae" stroke-width="1.4"/>
<line x1="920.5" y1="244.0" x2="924.5" y2="244.0" stroke="#e8e8e8" stroke-width="0.7"/>
<line x1="920.5" y1="249.0" x2="924.5" y2="249.0" stroke="#e8e8e8" stroke-width="0.7"/>
<line x1="920.5" y1="254.0" x2="924.5" y2="254.0" stroke="#e8e8e8" stroke-width="0.7"/>
<line x1="920.5" y1="259.0" x2="924.5" y2="259.0" stroke="#e8e8e8" stroke-width="0.7"/>
<line x1="920.5" y1="264.0" x2="924.5" y2="264.0" stroke="#e8e8e8" stroke-width="0.7"/>
<line x1="920.5" y1="269.0" x2="924.5" y2="269.0" stroke="#e8e8e8" stroke-width="0.7"/>
<line x1="920.5" y1="274.0" x2="924.5" y2="274.0" stroke="#e8e8e8" stroke-width="0.7"/>
<line x1="920.5" y1="279.0" x2="924.5" y2="279.0" stroke="#e8e8e8" stroke-width="0.7"/>
<line x1="920.5" y1="284.0" x2="924.5" y2="284.0" stroke="#e8e8e8" stroke-width="0.7"/>
<line x1="920.5" y1="289.0" x2="924.5" y2="289.0" stroke="#e8e8e8" stroke-width="0.7"/>
<line x1="920.5" y1="294.0" x2="924.5" y2="294.0" stroke="#e8e8e8" stroke-width="0.7"/>
<line x1="920.5" y1="299.0" x2="924.5" y2="299.0" stroke="#e8e8e8" stroke-width="0.7"/>
<line x1="920.5" y1="304.0" x2="924.5" y2="304.0" stroke="#e8e8e8" stroke-width="0.7"/>
<line x1="920.5" y1="309.0" x2="924.5" y2="309.0" stroke="#e8e8e8" stroke-width="0.7"/>
<line x1="920.5" y1="314.0" x2="924.5" y2="314.0" stroke="#e8e8e8" stroke-width="0.7"/>
<line x1="920.5" y1="319.0" x2="924.5" y2="319.0" stroke="#e8e8e8" stroke-width="0.7"/>
<line x1="920.5" y1="324.0" x2="924.5" y2="324.0" stroke="#e8e8e8" stroke-width="0.7"/>
<line x1="920.5" y1="329.0" x2="924.5" y2="329.0" stroke="#e8e8e8" stroke-width="0.7"/>
<rect x="911.6" y="298.4" width="21.8" height="3.6" rx="1.5" fill="none" stroke="#e8e8e8" stroke-width="0.9"/>
<line x1="914.1" y1="302.0" x2="914.1" y2="314.0" stroke="#e8e8e8" stroke-width="0.8"/>
<line x1="916.6" y1="302.0" x2="916.6" y2="314.0" stroke="#e8e8e8" stroke-width="0.8"/>
<line x1="928.4" y1="302.0" x2="928.4" y2="314.0" stroke="#e8e8e8" stroke-width="0.8"/>
<line x1="930.9" y1="302.0" x2="930.9" y2="314.0" stroke="#e8e8e8" stroke-width="0.8"/>
<rect x="912.1" y="314.0" width="20.8" height="4.0" rx="1.5" fill="none" stroke="#e8e8e8" stroke-width="0.9"/>
<line x1="914.1" y1="318.0" x2="914.1" y2="404.0" stroke="#e8e8e8" stroke-width="0.8"/>
<line x1="916.6" y1="318.0" x2="916.6" y2="404.0" stroke="#e8e8e8" stroke-width="0.8"/>
<line x1="928.4" y1="318.0" x2="928.4" y2="404.0" stroke="#e8e8e8" stroke-width="0.8"/>
<line x1="930.9" y1="318.0" x2="930.9" y2="404.0" stroke="#e8e8e8" stroke-width="0.8"/>
<line x1="916.5" y1="320.0" x2="916.5" y2="402.0" stroke="#e8e8e8" stroke-width="0.8"/>
<line x1="918.5" y1="320.0" x2="918.5" y2="402.0" stroke="#e8e8e8" stroke-width="0.8"/>
<line x1="926.5" y1="320.0" x2="926.5" y2="402.0" stroke="#e8e8e8" stroke-width="0.8"/>
<line x1="928.5" y1="320.0" x2="928.5" y2="402.0" stroke="#e8e8e8" stroke-width="0.8"/>
<line x1="917.0" y1="340.0" x2="928.0" y2="340.0" stroke="#e8e8e8" stroke-width="0.6"/>
<line x1="917.0" y1="344.0" x2="928.0" y2="344.0" stroke="#e8e8e8" stroke-width="0.6"/>
<line x1="917.0" y1="348.0" x2="928.0" y2="348.0" stroke="#e8e8e8" stroke-width="0.6"/>
<line x1="917.0" y1="352.0" x2="928.0" y2="352.0" stroke="#e8e8e8" stroke-width="0.6"/>
<line x1="917.0" y1="356.0" x2="928.0" y2="356.0" stroke="#e8e8e8" stroke-width="0.6"/>
<line x1="917.0" y1="360.0" x2="928.0" y2="360.0" stroke="#e8e8e8" stroke-width="0.6"/>
<line x1="917.0" y1="364.0" x2="928.0" y2="364.0" stroke="#e8e8e8" stroke-width="0.6"/>
<line x1="917.0" y1="368.0" x2="928.0" y2="368.0" stroke="#e8e8e8" stroke-width="0.6"/>
<line x1="917.0" y1="372.0" x2="928.0" y2="372.0" stroke="#e8e8e8" stroke-width="0.6"/>
<line x1="917.0" y1="376.0" x2="928.0" y2="376.0" stroke="#e8e8e8" stroke-width="0.6"/>
<line x1="917.0" y1="380.0" x2="928.0" y2="380.0" stroke="#e8e8e8" stroke-width="0.6"/>
<line x1="917.0" y1="384.0" x2="928.0" y2="384.0" stroke="#e8e8e8" stroke-width="0.6"/>
<line x1="917.0" y1="388.0" x2="928.0" y2="388.0" stroke="#e8e8e8" stroke-width="0.6"/>
<line x1="917.0" y1="392.0" x2="928.0" y2="392.0" stroke="#e8e8e8" stroke-width="0.6"/>
<line x1="917.0" y1="396.0" x2="928.0" y2="396.0" stroke="#e8e8e8" stroke-width="0.6"/>
<rect x="917.5" y="344" width="10" height="56" fill="#f4f4f4" opacity="0.55"/>
<rect x="919" y="250" width="6" height="80" fill="#f4f4f4" opacity="0.25"/>
<line x1="922.5" y1="318.0" x2="922.5" y2="404.0" stroke="#4fb3ae" stroke-width="1.4"/>
<rect x="911.6" y="402.0" width="21.8" height="3.5" rx="1.5" fill="none" stroke="#e8e8e8" stroke-width="0.9"/>
<line x1="914.6" y1="405.5" x2="914.6" y2="445.0" stroke="#e8e8e8" stroke-width="0.8"/>
<line x1="917.6" y1="405.5" x2="917.6" y2="445.0" stroke="#e8e8e8" stroke-width="0.8"/>
<line x1="927.4" y1="405.5" x2="927.4" y2="445.0" stroke="#e8e8e8" stroke-width="0.8"/>
<line x1="930.4" y1="405.5" x2="930.4" y2="445.0" stroke="#e8e8e8" stroke-width="0.8"/>
<rect x="913.6" y="330" width="17.799999999999955" height="2" fill="none" stroke="#e8e8e8" stroke-width="0.8"/>
<path d="M917.0 343.4 C936 359.4 960 385.4 985 407.4 C1005 425.4 1020 437.4 1036 443.4 L1066 444.4" fill="none" stroke="#4fb3ae" stroke-width="1"/>
<path d="M917.0 348.6 C936 364.6 960 390.6 985 412.6 C1005 430.6 1020 442.6 1036 448.6 L1066 449.6" fill="none" stroke="#4fb3ae" stroke-width="1"/>
<path d="M917.0 346.0 C936 362.0 960 388.0 985 410.0 C1005 428.0 1020 440.0 1036 446.0 L1066 447.0" fill="none" stroke="#4fb3ae" stroke-width="1.8" stroke-dasharray="1.3 1"/>
<rect x="1036.0" y="443.5" width="31.0" height="7.0" rx="2" fill="none" stroke="#4fb3ae" stroke-width="1"/>
<line x1="930.0" y1="362.3" x2="930.0" y2="465.0" stroke="#e8e8e8" stroke-width="0.8"/>
<line x1="933.6" y1="362.3" x2="933.6" y2="465.0" stroke="#e8e8e8" stroke-width="0.8"/>
<ellipse cx="931.8" cy="388.0" rx="2.4" ry="1.6" fill="none" stroke="#e8e8e8" stroke-width="0.8"/>
<rect x="929.6" y="436.2" width="4.4" height="2.5" fill="none" stroke="#e8e8e8" stroke-width="0.8"/>
<line x1="929.4" y1="464.6" x2="934.2" y2="464.6" stroke="#e8e8e8" stroke-width="0.8"/>
<line x1="938.9" y1="370.9" x2="938.9" y2="465.0" stroke="#e8e8e8" stroke-width="0.8"/>
<line x1="942.5" y1="370.9" x2="942.5" y2="465.0" stroke="#e8e8e8" stroke-width="0.8"/>
<ellipse cx="940.7" cy="394.4" rx="2.4" ry="1.6" fill="none" stroke="#e8e8e8" stroke-width="0.8"/>
<rect x="938.5" y="438.7" width="4.4" height="2.5" fill="none" stroke="#e8e8e8" stroke-width="0.8"/>
<line x1="940.7" y1="396.4" x2="940.7" y2="437.7" stroke="#e8e8e8" stroke-width="2.4" stroke-dasharray="1.2 1"/>
<line x1="938.3" y1="464.6" x2="943.1" y2="464.6" stroke="#e8e8e8" stroke-width="0.8"/>
<line x1="948.6" y1="380.4" x2="948.6" y2="486.0" stroke="#e8e8e8" stroke-width="0.8"/>
<line x1="952.2" y1="380.4" x2="952.2" y2="486.0" stroke="#e8e8e8" stroke-width="0.8"/>
<ellipse cx="950.4" cy="406.8" rx="2.4" ry="1.6" fill="none" stroke="#e8e8e8" stroke-width="0.8"/>
<rect x="948.2" y="456.4" width="4.4" height="2.5" fill="none" stroke="#e8e8e8" stroke-width="0.8"/>
<line x1="948.0" y1="485.6" x2="952.8" y2="485.6" stroke="#e8e8e8" stroke-width="0.8"/>
<line x1="959.6" y1="391.1" x2="959.6" y2="486.0" stroke="#e8e8e8" stroke-width="0.8"/>
<line x1="963.2" y1="391.1" x2="963.2" y2="486.0" stroke="#e8e8e8" stroke-width="0.8"/>
<ellipse cx="961.4" cy="414.8" rx="2.4" ry="1.6" fill="none" stroke="#e8e8e8" stroke-width="0.8"/>
<rect x="959.2" y="459.4" width="4.4" height="2.5" fill="none" stroke="#e8e8e8" stroke-width="0.8"/>
<line x1="961.4" y1="416.8" x2="961.4" y2="458.4" stroke="#e8e8e8" stroke-width="2.4" stroke-dasharray="1.2 1"/>
<line x1="959.0" y1="485.6" x2="963.8" y2="485.6" stroke="#e8e8e8" stroke-width="0.8"/>
<line x1="971.8" y1="402.7" x2="971.8" y2="505.0" stroke="#e8e8e8" stroke-width="0.8"/>
<line x1="975.4" y1="402.7" x2="975.4" y2="505.0" stroke="#e8e8e8" stroke-width="0.8"/>
<ellipse cx="973.6" cy="428.3" rx="2.4" ry="1.6" fill="none" stroke="#e8e8e8" stroke-width="0.8"/>
<rect x="971.4" y="476.4" width="4.4" height="2.5" fill="none" stroke="#e8e8e8" stroke-width="0.8"/>
<line x1="971.2" y1="504.6" x2="976.0" y2="504.6" stroke="#e8e8e8" stroke-width="0.8"/>
<line x1="984.2" y1="413.9" x2="984.2" y2="505.0" stroke="#e8e8e8" stroke-width="0.8"/>
<line x1="987.8" y1="413.9" x2="987.8" y2="505.0" stroke="#e8e8e8" stroke-width="0.8"/>
<ellipse cx="986.0" cy="436.7" rx="2.4" ry="1.6" fill="none" stroke="#e8e8e8" stroke-width="0.8"/>
<rect x="983.8" y="479.5" width="4.4" height="2.5" fill="none" stroke="#e8e8e8" stroke-width="0.8"/>
<line x1="986.0" y1="438.7" x2="986.0" y2="478.5" stroke="#e8e8e8" stroke-width="2.4" stroke-dasharray="1.2 1"/>
<line x1="983.6" y1="504.6" x2="988.4" y2="504.6" stroke="#e8e8e8" stroke-width="0.8"/>
<line x1="996.8" y1="424.9" x2="996.8" y2="526.0" stroke="#e8e8e8" stroke-width="0.8"/>
<line x1="1000.4" y1="424.9" x2="1000.4" y2="526.0" stroke="#e8e8e8" stroke-width="0.8"/>
<ellipse cx="998.6" cy="450.2" rx="2.4" ry="1.6" fill="none" stroke="#e8e8e8" stroke-width="0.8"/>
<rect x="996.4" y="497.7" width="4.4" height="2.5" fill="none" stroke="#e8e8e8" stroke-width="0.8"/>
<line x1="996.2" y1="525.6" x2="1001.0" y2="525.6" stroke="#e8e8e8" stroke-width="0.8"/>
<line x1="1010.3" y1="435.6" x2="1010.3" y2="526.0" stroke="#e8e8e8" stroke-width="0.8"/>
<line x1="1013.9" y1="435.6" x2="1013.9" y2="526.0" stroke="#e8e8e8" stroke-width="0.8"/>
<ellipse cx="1012.1" cy="458.2" rx="2.4" ry="1.6" fill="none" stroke="#e8e8e8" stroke-width="0.8"/>
<rect x="1009.9" y="500.7" width="4.4" height="2.5" fill="none" stroke="#e8e8e8" stroke-width="0.8"/>
<line x1="1012.1" y1="460.2" x2="1012.1" y2="499.7" stroke="#e8e8e8" stroke-width="2.4" stroke-dasharray="1.2 1"/>
<line x1="1009.7" y1="525.6" x2="1014.5" y2="525.6" stroke="#e8e8e8" stroke-width="0.8"/>
<line x1="1023.9" y1="444.3" x2="1023.9" y2="547.0" stroke="#e8e8e8" stroke-width="0.8"/>
<line x1="1027.5" y1="444.3" x2="1027.5" y2="547.0" stroke="#e8e8e8" stroke-width="0.8"/>
<ellipse cx="1025.7" cy="470.0" rx="2.4" ry="1.6" fill="none" stroke="#e8e8e8" stroke-width="0.8"/>
<rect x="1023.5" y="518.2" width="4.4" height="2.5" fill="none" stroke="#e8e8e8" stroke-width="0.8"/>
<line x1="1023.3" y1="546.6" x2="1028.1" y2="546.6" stroke="#e8e8e8" stroke-width="0.8"/>
<line x1="1038.2" y1="451.0" x2="1038.2" y2="547.0" stroke="#e8e8e8" stroke-width="0.8"/>
<line x1="1041.8" y1="451.0" x2="1041.8" y2="547.0" stroke="#e8e8e8" stroke-width="0.8"/>
<ellipse cx="1040.0" cy="475.0" rx="2.4" ry="1.6" fill="none" stroke="#e8e8e8" stroke-width="0.8"/>
<rect x="1037.8" y="520.1" width="4.4" height="2.5" fill="none" stroke="#e8e8e8" stroke-width="0.8"/>
<line x1="1040.0" y1="477.0" x2="1040.0" y2="519.1" stroke="#e8e8e8" stroke-width="2.4" stroke-dasharray="1.2 1"/>
<line x1="1037.6" y1="546.6" x2="1042.4" y2="546.6" stroke="#e8e8e8" stroke-width="0.8"/>
<line x1="1049.6" y1="451.0" x2="1049.6" y2="566.0" stroke="#e8e8e8" stroke-width="0.8"/>
<line x1="1053.2" y1="451.0" x2="1053.2" y2="566.0" stroke="#e8e8e8" stroke-width="0.8"/>
<ellipse cx="1051.4" cy="479.8" rx="2.4" ry="1.6" fill="none" stroke="#e8e8e8" stroke-width="0.8"/>
<rect x="1049.2" y="533.8" width="4.4" height="2.5" fill="none" stroke="#e8e8e8" stroke-width="0.8"/>
<line x1="1049.0" y1="565.6" x2="1053.8" y2="565.6" stroke="#e8e8e8" stroke-width="0.8"/>
<line x1="1060.3" y1="451.0" x2="1060.3" y2="566.0" stroke="#e8e8e8" stroke-width="0.8"/>
<line x1="1063.9" y1="451.0" x2="1063.9" y2="566.0" stroke="#e8e8e8" stroke-width="0.8"/>
<ellipse cx="1062.1" cy="479.8" rx="2.4" ry="1.6" fill="none" stroke="#e8e8e8" stroke-width="0.8"/>
<rect x="1059.9" y="533.8" width="4.4" height="2.5" fill="none" stroke="#e8e8e8" stroke-width="0.8"/>
<line x1="1062.1" y1="481.8" x2="1062.1" y2="532.8" stroke="#e8e8e8" stroke-width="2.4" stroke-dasharray="1.2 1"/>
<line x1="1059.7" y1="565.6" x2="1064.5" y2="565.6" stroke="#e8e8e8" stroke-width="0.8"/>
<line x1="1056.5" y1="455" x2="1056.5" y2="520" stroke="#e8e8e8" stroke-width="3" stroke-dasharray="1.4 1.2"/></svg>
<div class="a" style="left:0;top:590px;width:1125px;height:20px;background:#f0f0f0;border-top:1px solid #fafafa"></div>
<div class="t" style="left:453px;top:597px;font-size:6.8px;letter-spacing:-0.15px;color:#222">ROTATE: Select</div>
<div class="btn" style="left:507px;width:45px">Previous (P)</div>
<div class="btn" style="left:556px;width:53px">Finish (ESC)</div>
<div class="btn" style="left:613px;width:28px">All (A)</div>
<div class="btn" style="left:646px;width:39px">Layers (L)</div>
<div class="a" style="left:0;top:609px;width:1125px;height:1px;background:#b4c0cf"></div>
<div class="a" style="left:0;top:610px;width:1125px;height:6px;background:linear-gradient(#dfe9f5,#c8d7ea)"></div>
<svg class="a" style="left:0px;top:103px;overflow:visible" width="80" height="16" viewBox="0 103 80 16"><rect x="0" y="105.5" width="2.2" height="7.5" fill="#222"/><rect x="3.2" y="105.5" width="2.2" height="7.5" fill="#222"/><rect x="1.5" y="107" width="2.5" height="2" fill="#555"/><path d="M10 111l4-4h6l-4 4z" fill="#f2cf5a"/><path d="M10 111h6v3h-6z" fill="#d8a82a"/><path d="M16 111l4-4v3l-4 4z" fill="#b88a20"/><rect x="14.5" y="104.5" width="5" height="4" fill="#ddd" stroke="#666" stroke-width=".6"/><path d="M24 111l4-4h6l-4 4z" fill="#e6e6e6" stroke="#888" stroke-width=".5"/><path d="M24 111h6v3h-6z" fill="#fff" stroke="#888" stroke-width=".5"/><rect x="25.5" y="106" width="5" height="4" fill="#ccc"/><path d="M30.5 104l3.5 3.5M34 104l-3.5 3.5" stroke="#e02020" stroke-width="1.2"/><path d="M42.5 113V107.5M39 110l3.5-3.5 3.5 3.5" fill="none" stroke="#333" stroke-width="1.8"/><path d="M56.5 106v5.5M53 109.5l3.5 3.5 3.5-3.5" fill="none" stroke="#333" stroke-width="1.8"/><rect x="63" y="103" width="14" height="12.5" fill="#cde4f7" stroke="#a8cbec" stroke-width=".6"/><path d="M66 112h3v-5h-2l1-1.5" fill="none" stroke="#888" stroke-width="1"/><rect x="70" y="108" width="5" height="5.5" fill="#f3f3f3" stroke="#999" stroke-width=".6"/><path d="M72.5 109v4" stroke="#d06060" stroke-width=".6"/></svg>
<svg class="a" style="left:0px;top:577px;overflow:visible" width="184" height="13" viewBox="0 577 184 13"><path d="M1.5 580.5h5l1.5 1.5v5.5h-6z" fill="#888"/><rect x="3" y="582" width="7.5" height="5.5" rx="1" fill="#f5d570" stroke="#c9a040" stroke-width=".6"/><rect x="20" y="578.5" width="9.5" height="8.5" fill="#f4f4f4" stroke="#555" stroke-width=".8"/><circle cx="22" cy="580.5" r=".9" fill="#d02020"/><circle cx="22" cy="583" r=".9" fill="#e0b000"/><circle cx="22" cy="585.5" r=".9" fill="#d02020"/><path d="M24 580.5h4M24 583h4M24 585.5h4" stroke="#666" stroke-width=".6"/><path d="M39 582l2-2h7v5l-2 2z" fill="#888"/><rect x="39" y="582" width="7" height="5" fill="#f5d570" stroke="#c9a040" stroke-width=".6"/><path d="M60 578v9" stroke="#333" stroke-width=".8"/><circle cx="63" cy="579.5" r="1.2" fill="#e0b000"/><circle cx="63" cy="583" r="1.5" fill="#d01818"/><circle cx="63" cy="586.5" r="1.1" fill="#777"/><path d="M77 578l2.5 1.5-2.5 1.5z" fill="#e02020"/><rect x="80" y="578" width="3.5" height="5" fill="#e8b800"/><path d="M77.5 588l2-4h6l-2 4z" fill="#fff" stroke="#888" stroke-width=".6"/><rect x="95" y="580" width="2.3" height="6" fill="#e0a800"/><rect x="98.3" y="580" width="2.3" height="6" fill="#e0a800"/><rect x="101.6" y="580" width="2.3" height="6" fill="#e0a800"/><path d="M95 580h9" stroke="#555" stroke-width=".8"/><rect x="113" y="579" width="5" height="5" fill="#f2f2f2" stroke="#666" stroke-width=".6"/><rect x="115" y="582" width="6.5" height="5.5" fill="#f2f2f2" stroke="#666" stroke-width=".6"/><path d="M116 584.5h4l-1-1" fill="none" stroke="#d02020" stroke-width=".8"/><path d="M133 588l2-4 3 0 2-4" fill="none" stroke="#e0a800" stroke-width="2.2"/><path d="M134 586l6-6" stroke="#555" stroke-width=".6"/><rect x="151" y="578.5" width="9" height="9" fill="#d05050"/><rect x="152.3" y="579.8" width="6.4" height="6.4" fill="none" stroke="#f3c0c0" stroke-width=".6"/><path d="M173.5 578.5v8.5M170 587.5h8" stroke="#555" stroke-width=".8"/><path d="M173.5 579v6" stroke="#d04040" stroke-width=".8"/></svg>
<svg class="a" style="left:800px;top:609px;overflow:visible" width="325" height="7" viewBox="800 609 325 7"><path d="M803 611v5M811 611v5M819 611v5" stroke="#a9b5c5" stroke-width=".8"/><path d="M821 616l3-3.5 4 1.5" fill="none" stroke="#d03030" stroke-width="1.2"/><path d="M837 616l4-3 4 3" fill="#aaa"/><circle cx="841" cy="614" r="1" fill="#d02020"/><path d="M852 612v4" stroke="#d02020" stroke-width="1"/><rect x="854" y="613.5" width="6" height="3" fill="#999"/><path d="M866 611.5v4.5" stroke="#2030d0" stroke-width="1"/><circle cx="870" cy="615.5" r=".9" fill="#20a020"/><path d="M884 611.5v4.5" stroke="#20a020" stroke-width="1"/><path d="M898 613v3" stroke="#20a020" stroke-width="1"/><rect x="908" y="613" width="8" height="3" fill="#c9b060"/><rect x="923" y="613" width="8" height="3" fill="#e0b030"/><rect x="937" y="613" width="8" height="3" fill="#c8b070"/><rect x="951" y="613" width="8" height="3" fill="#aaa"/><rect x="965" y="613" width="8" height="3" fill="#e0b030"/><rect x="980" y="613" width="8" height="3" fill="#aaa"/><rect x="994" y="613" width="8" height="3" fill="#aaa"/><path d="M1013 611.5v4.5" stroke="#d02020" stroke-width="1"/><rect x="1023" y="613" width="7" height="3" fill="#f0c030"/><path d="M1062 611v5M1096 611v5M1121 611v5" stroke="#c2ccd9" stroke-width=".8"/></svg>
<div class="t" style="left:1039px;top:612px;font-size:6px;color:#9fb0c8">SNAP</div>
<div class="t" style="left:1067px;top:612px;font-size:6px;color:#9fb0c8">ORTHO</div>
<div class="t" style="left:1100px;top:612px;font-size:6px;color:#9fb0c8">AUTO</div>
</body></html>
